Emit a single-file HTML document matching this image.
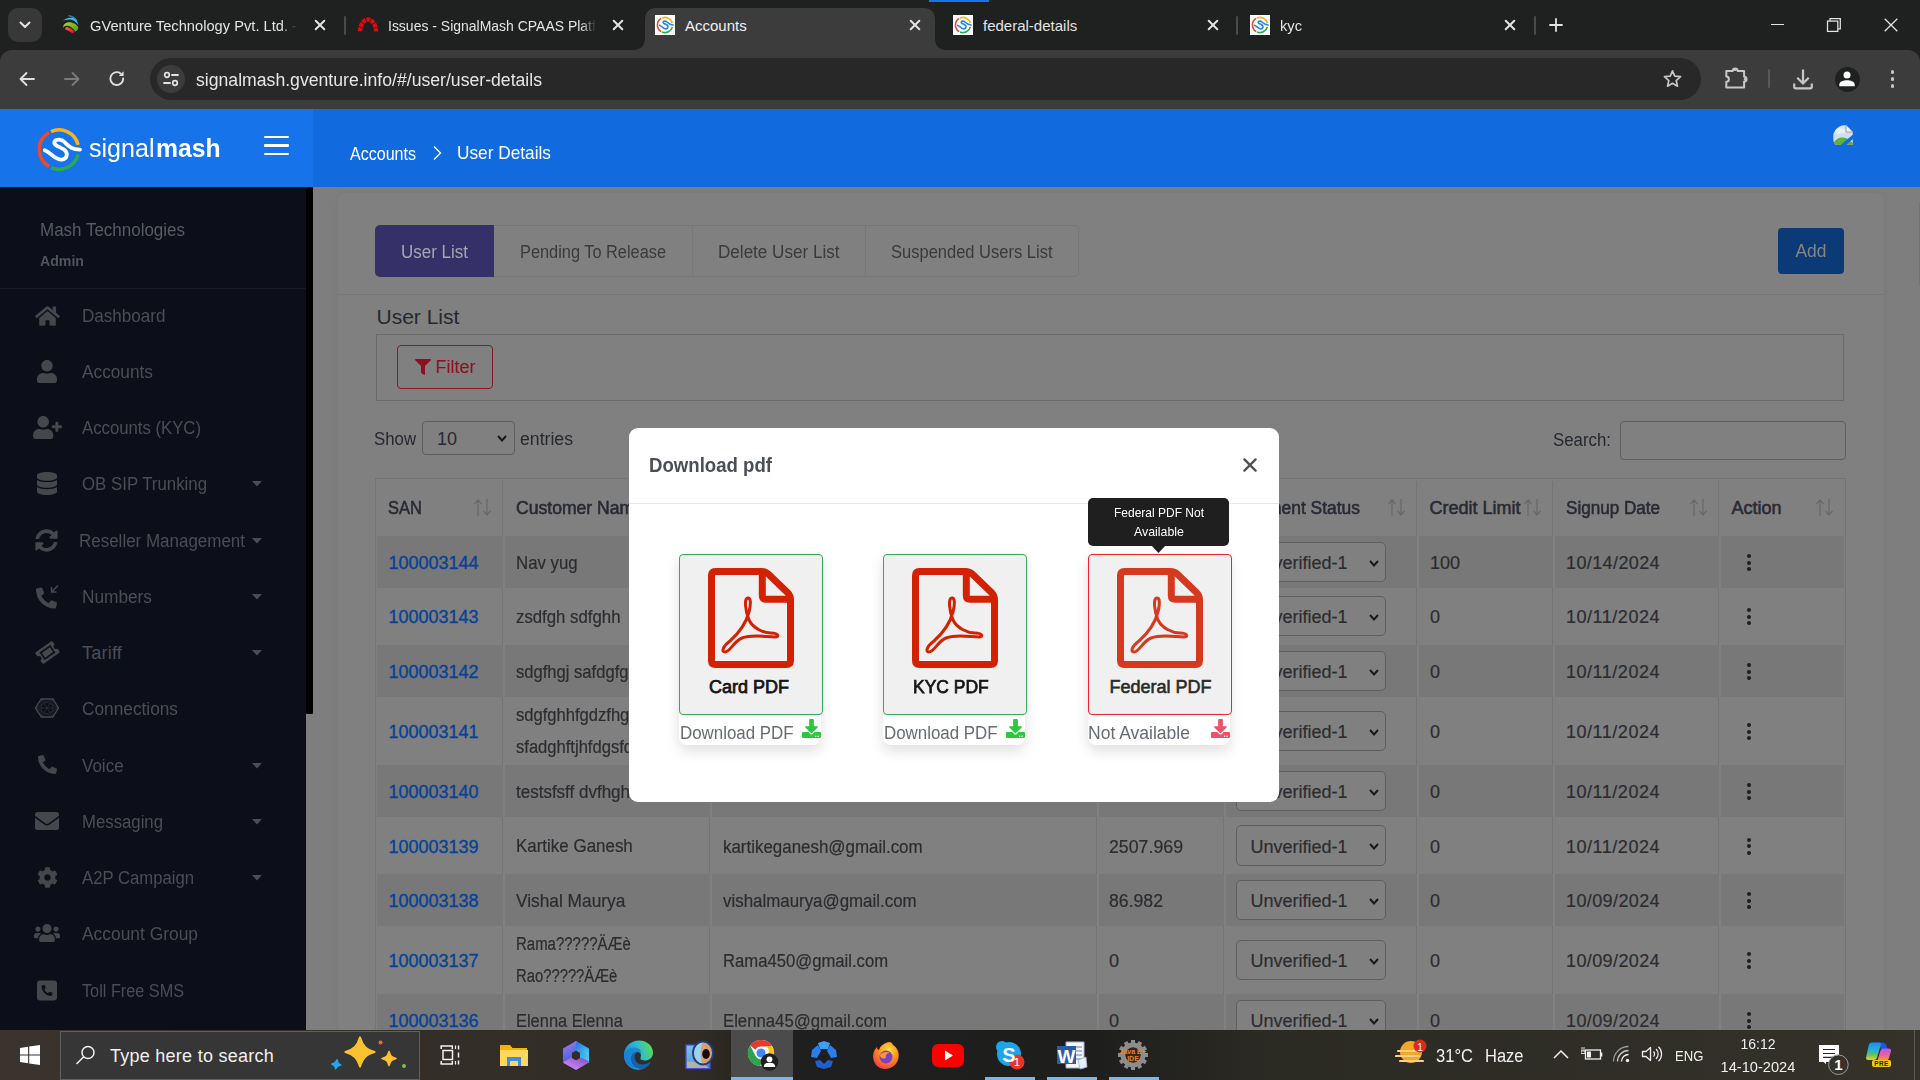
<!DOCTYPE html>
<html lang="en"><head><meta charset="utf-8"><title>Accounts</title>
<style>
html,body{margin:0;padding:0;background:#1f2020;}
body{width:1920px;height:1080px;position:relative;overflow:hidden;font-family:"Liberation Sans",sans-serif;}
.b{position:absolute;display:block;}
.t{position:absolute;white-space:nowrap;}
.bt{-webkit-text-stroke:0.2px #2c2c30;}
</style></head><body>
<div class="b" style="left:0px;top:0px;width:1920px;height:50px;background:#1f2020"></div>
<div class="b" style="left:0px;top:50px;width:1920px;height:59px;background:#3c3c3c"></div>
<div class="b" style="left:0px;top:50px;width:12px;height:12px;background:#1f2020"></div>
<div class="b" style="left:0px;top:50px;width:24px;height:24px;background:#3c3c3c;border-radius:12px 0 0 0"></div>
<div class="b" style="left:1908px;top:50px;width:12px;height:12px;background:#1f2020"></div>
<div class="b" style="left:1896px;top:50px;width:24px;height:24px;background:#3c3c3c;border-radius:0 12px 0 0"></div>
<div class="b" style="left:929px;top:0px;width:60px;height:2px;background:#1a73e8"></div>
<div class="b" style="left:8px;top:8px;width:34px;height:34px;background:#383838;border-radius:10px"></div>
<svg class="b" style="left:17px;top:19px;" width="16" height="12" viewBox="0 0 16 12"><path d="M3.5 3.5 L8 8 L12.5 3.5" stroke="#e3e3e3" stroke-width="2" fill="none" stroke-linecap="round" stroke-linejoin="round"/></svg>
<svg class="b" style="left:633px;top:8px" width="314" height="42" viewBox="0 0 314 42"><path fill="#3c3c3c" d="M0 42 Q12 42 12 30 V12 Q12 0 24 0 H290 Q302 0 302 12 V30 Q302 42 314 42 Z"/></svg>
<svg class="b" style="left:61.5px;top:15.3px;" width="18" height="19.5" viewBox="0 0 18 19.500"><defs><linearGradient id="gv1" x1="0" y1="0" x2="1" y2="1"><stop offset="0" stop-color="#a6d82e"/><stop offset="1" stop-color="#4e9a1e"/></linearGradient><linearGradient id="gv2" x1="0" y1="0" x2="1" y2="0.600"><stop offset="0" stop-color="#ff7a10"/><stop offset="1" stop-color="#f01010"/></linearGradient></defs><path d="M6.500 0.800 C10 0.300 13.500 2.500 15 6 C13 3.300 10 1.800 6.500 0.800Z" fill="#2a9fd0" stroke="#2a9fd0" stroke-width="0.600"/><path d="M0.500 6.500 C3 2.500 10 1.500 13 4 C15 5.500 16.300 8 16.300 10.500 C14.500 6.800 11 4.600 7.500 4.600 C4.500 4.600 2 5.300 0.500 6.500Z" fill="#45bfe8"/><path d="M1.500 13 C0.300 9.500 4 6.800 8 7.200 C12 7.600 15.500 10 16.300 12.500 C16.300 14.500 15 16 13.200 16.600 C11.500 13.500 8 11 5 10.800 C3 10.800 1.800 11.500 1.500 13 Z" fill="url(#gv1)"/><path d="M3.300 15.500 C3 13.500 3.500 12.500 4.200 12.500 C5 12 10.500 14.300 12.500 17 C12 18 11 18.800 10.300 19 C8 17 5.800 16 3.300 15.500Z" fill="#1a2060"/><path d="M3 14.200 C3.200 12.800 4 12 5 12 C8 12.500 11 14.500 12.500 16.500 C12 17.500 11 18.200 10.300 18.300 C8 16.500 5.500 15 3 14.200Z" fill="url(#gv2)"/></svg>
<div class="t " style="font-size:15px;line-height:15px;top:18.00px;color:#e3e3e3;left:90.00px;transform:scaleX(0.9786);transform-origin:0 0;white-space:nowrap;overflow:hidden;padding-bottom:5px;width:213.6px;-webkit-mask-image:linear-gradient(90deg,#000 195.6px,transparent 212.6px);mask-image:linear-gradient(90deg,#000 195.6px,transparent 211.6px);">GVenture Technology Pvt. Ltd. - Home</div>
<svg class="b" style="left:312px;top:17px;" width="16" height="16" viewBox="0 0 16 16"><path d="M3.7 3.7 L12.3 12.3 M12.3 3.7 L3.7 12.3" stroke="#e3e3e3" stroke-width="2.0" stroke-linecap="round"/></svg>
<div class="b" style="left:343.5px;top:16px;width:2px;height:19px;background:#4a4a4a;border-radius:1px"></div>
<svg class="b" style="left:356px;top:15px;" width="24" height="18" viewBox="0 0 24 18"><path d="M4 16.300 A8 11.800 0 0 1 20 16.300" stroke="#e00a0a" stroke-width="4.300" fill="none" stroke-dasharray="3.900 0.750"/></svg>
<div class="t " style="font-size:15px;line-height:15px;top:18.00px;color:#e3e3e3;left:388.00px;transform:scaleX(0.9316);transform-origin:0 0;white-space:nowrap;overflow:hidden;padding-bottom:5px;width:225.4px;-webkit-mask-image:linear-gradient(90deg,#000 207.4px,transparent 224.4px);mask-image:linear-gradient(90deg,#000 207.4px,transparent 223.4px);">Issues - SignalMash CPAAS Platform</div>
<svg class="b" style="left:609.5px;top:17px;" width="16" height="16" viewBox="0 0 16 16"><path d="M3.7 3.7 L12.3 12.3 M12.3 3.7 L3.7 12.3" stroke="#e3e3e3" stroke-width="2.0" stroke-linecap="round"/></svg>
<svg class="b" style="left:655px;top:15px" width="20" height="20" viewBox="0 0 20 20"><rect width="20" height="20" fill="#fff"/><path d="M6.91 3.06 A7.6 7.6 0 0 1 17.37 8.16" stroke="#f9b21a" stroke-width="1.6" fill="none"/><path d="M17.37 11.84 A7.6 7.6 0 0 1 7.03 17.00" stroke="#2eaa4c" stroke-width="1.6" fill="none"/><path d="M6.20 16.58 A7.6 7.6 0 0 1 6.20 3.42" stroke="#ea4a2e" stroke-width="1.6" fill="none"/><g transform="translate(10 10) scale(0.386)"><path d="M -14.2 0.7 C -8 3, -3 11, 3 10 C 9 9, 9 3, 5 0 C 1 -3, -6 -4, -4.5 -8 C -3 -11, 3 -10.5, 6 -7 C 10 -3, 13 0, 21 0" stroke="#1e88e5" stroke-width="4.2" stroke-linecap="round" fill="none"/></g></svg>
<div class="t " style="font-size:15px;line-height:15px;top:18.00px;color:#f1f1f1;left:685.00px;">Accounts</div>
<svg class="b" style="left:907px;top:17px;" width="16" height="16" viewBox="0 0 16 16"><path d="M3.7 3.7 L12.3 12.3 M12.3 3.7 L3.7 12.3" stroke="#e3e3e3" stroke-width="2.0" stroke-linecap="round"/></svg>
<svg class="b" style="left:953px;top:15px" width="20" height="20" viewBox="0 0 20 20"><rect width="20" height="20" fill="#fff"/><path d="M6.91 3.06 A7.6 7.6 0 0 1 17.37 8.16" stroke="#f9b21a" stroke-width="1.6" fill="none"/><path d="M17.37 11.84 A7.6 7.6 0 0 1 7.03 17.00" stroke="#2eaa4c" stroke-width="1.6" fill="none"/><path d="M6.20 16.58 A7.6 7.6 0 0 1 6.20 3.42" stroke="#ea4a2e" stroke-width="1.6" fill="none"/><g transform="translate(10 10) scale(0.386)"><path d="M -14.2 0.7 C -8 3, -3 11, 3 10 C 9 9, 9 3, 5 0 C 1 -3, -6 -4, -4.5 -8 C -3 -11, 3 -10.5, 6 -7 C 10 -3, 13 0, 21 0" stroke="#1e88e5" stroke-width="4.2" stroke-linecap="round" fill="none"/></g></svg>
<div class="t " style="font-size:15px;line-height:15px;top:18.00px;color:#e3e3e3;left:983.00px;">federal-details</div>
<svg class="b" style="left:1204.5px;top:17px;" width="16" height="16" viewBox="0 0 16 16"><path d="M3.7 3.7 L12.3 12.3 M12.3 3.7 L3.7 12.3" stroke="#e3e3e3" stroke-width="2.0" stroke-linecap="round"/></svg>
<div class="b" style="left:1235.5px;top:16px;width:2px;height:19px;background:#4a4a4a;border-radius:1px"></div>
<svg class="b" style="left:1250px;top:15px" width="20" height="20" viewBox="0 0 20 20"><rect width="20" height="20" fill="#fff"/><path d="M6.91 3.06 A7.6 7.6 0 0 1 17.37 8.16" stroke="#f9b21a" stroke-width="1.6" fill="none"/><path d="M17.37 11.84 A7.6 7.6 0 0 1 7.03 17.00" stroke="#2eaa4c" stroke-width="1.6" fill="none"/><path d="M6.20 16.58 A7.6 7.6 0 0 1 6.20 3.42" stroke="#ea4a2e" stroke-width="1.6" fill="none"/><g transform="translate(10 10) scale(0.386)"><path d="M -14.2 0.7 C -8 3, -3 11, 3 10 C 9 9, 9 3, 5 0 C 1 -3, -6 -4, -4.5 -8 C -3 -11, 3 -10.5, 6 -7 C 10 -3, 13 0, 21 0" stroke="#1e88e5" stroke-width="4.2" stroke-linecap="round" fill="none"/></g></svg>
<div class="t " style="font-size:15px;line-height:15px;top:18.00px;color:#e3e3e3;left:1280.00px;transform:scaleX(0.9778);transform-origin:0 0;">kyc</div>
<svg class="b" style="left:1502px;top:17px;" width="16" height="16" viewBox="0 0 16 16"><path d="M3.7 3.7 L12.3 12.3 M12.3 3.7 L3.7 12.3" stroke="#e3e3e3" stroke-width="2.0" stroke-linecap="round"/></svg>
<div class="b" style="left:1533.5px;top:16px;width:2px;height:19px;background:#4a4a4a;border-radius:1px"></div>
<svg class="b" style="left:1548px;top:17px;" width="16" height="16" viewBox="0 0 16 16"><path d="M8 2 V14 M2 8 H14" stroke="#e3e3e3" stroke-width="1.8" stroke-linecap="round"/></svg>
<div class="b" style="left:1771px;top:24px;width:13px;height:1.4px;background:#e3e3e3"></div>
<svg class="b" style="left:1826px;top:17px;" width="16" height="16" viewBox="0 0 16 16"><rect x="1.500" y="4.100" width="10.300" height="10.300" fill="none" stroke="#e3e3e3" stroke-width="1.250"/><path d="M4 4 V1.600 H14.300 V11.900 H12" fill="none" stroke="#e3e3e3" stroke-width="1.250"/></svg>
<svg class="b" style="left:1884px;top:18px;" width="14" height="14" viewBox="0 0 14 14"><path d="M0.7 0.7 L13.3 13.3 M13.3 0.7 L0.7 13.3" stroke="#e3e3e3" stroke-width="1.3"/></svg>
<svg class="b" style="left:18px;top:70px;" width="18" height="18" viewBox="0 0 18 18"><path d="M16 9 H3 M8.5 3 L2.5 9 L8.5 15" stroke="#dedede" stroke-width="1.9" fill="none" stroke-linecap="round" stroke-linejoin="round"/></svg>
<svg class="b" style="left:63px;top:70px;" width="18" height="18" viewBox="0 0 18 18"><path d="M2 9 H15 M9.5 3 L15.500 9 L9.5 15" stroke="#7a7a7a" stroke-width="1.9" fill="none" stroke-linecap="round" stroke-linejoin="round"/></svg>
<svg class="b" style="left:108px;top:69px;" width="18" height="19" viewBox="0 0 18 19"><path d="M15.2 9.5 A6.4 6.4 0 1 1 12.6 4.4" stroke="#dedede" stroke-width="1.9" fill="none" stroke-linecap="round"/><path d="M15.600 2.2 V7 H10.800 Z" fill="#dedede"/></svg>
<div class="b" style="left:150px;top:58px;width:1551px;height:42px;background:#282828;border-radius:21px"></div>
<div class="b" style="left:157px;top:65px;width:28px;height:28px;background:#3c3c3c;border-radius:14px"></div>
<svg class="b" style="left:162px;top:71px;" width="18" height="16" viewBox="0 0 18 16"><circle cx="5" cy="4" r="2.300" fill="none" stroke="#e3e3e3" stroke-width="1.700"/><path d="M10 4 H16" stroke="#e3e3e3" stroke-width="1.800" stroke-linecap="round"/><circle cx="13" cy="12" r="2.300" fill="none" stroke="#e3e3e3" stroke-width="1.700"/><path d="M2 12 H8" stroke="#e3e3e3" stroke-width="1.800" stroke-linecap="round"/></svg>
<div class="t " style="font-size:18px;line-height:18px;top:71.00px;color:#e6e6e6;left:196.00px;transform:scaleX(0.9796);transform-origin:0 0;">signalmash.gventure.info/#/user/user-details</div>
<svg class="b" style="left:1662px;top:68px;" width="21" height="21" viewBox="0 0 24 24"><path d="M12 3.2 L14.600 9.300 L21.200 9.900 L16.200 14.300 L17.700 20.800 L12 17.400 L6.300 20.800 L7.800 14.300 L2.800 9.900 L9.400 9.300 Z" fill="none" stroke="#c7c7c7" stroke-width="1.900" stroke-linejoin="round"/></svg>
<svg class="b" style="left:1722px;top:64px;" width="26" height="26" viewBox="0 0 26 26"><path d="M4.300 6.900 H10.800 A2.400 2.400 0 0 1 15.600 6.900 H22.100 V12.800 A2.400 2.400 0 0 1 22.100 17.600 V23.500 H4.300 V17.800 A2.600 2.600 0 0 0 4.300 12.600 Z" fill="none" stroke="#c7c7c7" stroke-width="2" stroke-linejoin="round"/><circle cx="13.200" cy="5.600" r="1.500" fill="#c7c7c7"/><circle cx="23.300" cy="15.200" r="1.400" fill="#c7c7c7"/></svg>
<div class="b" style="left:1768px;top:69px;width:2px;height:19px;background:#5a5a5a;border-radius:1px"></div>
<svg class="b" style="left:1791.8px;top:67.5px;" width="22" height="22" viewBox="0 0 22 22"><path d="M11 1.600 V15.200 M5.300 9.700 L11 15.500 L16.700 9.700" stroke="#c7c7c7" stroke-width="2.200" fill="none" stroke-linecap="butt" stroke-linejoin="miter"/><path d="M2.200 15.400 V18.700 Q2.200 20.300 3.800 20.300 H18.200 Q19.800 20.300 19.800 18.700 V15.400" stroke="#c7c7c7" stroke-width="2.200" fill="none"/></svg>
<div class="b" style="left:1835px;top:66.5px;width:25px;height:25px;background:#1f2020;border-radius:13px"></div>
<svg class="b" style="left:1838.4px;top:69.5px;" width="18" height="18" viewBox="0 0 18 18"><circle cx="9" cy="4.900" r="3.500" fill="#fff"/><path d="M1.300 16.200 V14.500 C1.300 11.500 6 10.300 9 10.300 C12 10.300 16.700 11.500 16.700 14.500 V16.200 Z" fill="#fff"/></svg>
<div class="b" style="left:1890.5px;top:69.9px;width:3.8px;height:3.8px;background:#c7c7c7;border-radius:2px"></div>
<div class="b" style="left:1890.5px;top:77px;width:3.8px;height:3.8px;background:#c7c7c7;border-radius:2px"></div>
<div class="b" style="left:1890.5px;top:84px;width:3.8px;height:3.8px;background:#c7c7c7;border-radius:2px"></div>
<div class="b" style="left:0px;top:109px;width:313px;height:78px;background:#1673ea"></div>
<div class="b" style="left:313px;top:109px;width:1607px;height:78px;background:#126adf"></div>
<svg class="b" style="left:30px;top:120px" width="60" height="60" viewBox="0 0 60 60"><path d="M20.99 11.60 A19.7 19.7 0 0 1 48.11 24.83" stroke="#f9b21a" stroke-width="3.6" fill="none"/><path d="M48.11 34.37 A19.7 19.7 0 0 1 21.30 47.73" stroke="#2eaa4c" stroke-width="3.6" fill="none"/><path d="M19.15 46.66 A19.7 19.7 0 0 1 19.15 12.54" stroke="#ea4a2e" stroke-width="3.6" fill="none"/><g transform="translate(29 29.6) scale(1.000)"><path d="M -14.2 0.7 C -8 3, -3 11, 3 10 C 9 9, 9 3, 5 0 C 1 -3, -6 -4, -4.5 -8 C -3 -11, 3 -10.5, 6 -7 C 10 -3, 13 0, 21 0" stroke="#fff" stroke-width="3.8" stroke-linecap="round" fill="none"/></g></svg>
<div class="t " style="font-size:26px;line-height:26px;top:135.00px;color:#fff;left:89.00px;transform:scaleX(0.9642);transform-origin:0 0;">signal</div>
<div class="t " style="font-size:26px;line-height:26px;top:135.00px;color:#fff;font-weight:700;left:155.70px;transform:scaleX(0.9511);transform-origin:0 0;">mash</div>
<div class="b" style="left:264px;top:135.7px;width:25px;height:2.6px;background:#fff;border-radius:1px"></div>
<div class="b" style="left:264px;top:144.1px;width:25px;height:2.6px;background:#fff;border-radius:1px"></div>
<div class="b" style="left:264px;top:152.5px;width:25px;height:2.6px;background:#fff;border-radius:1px"></div>
<div class="t " style="font-size:18px;line-height:18px;top:144.60px;color:#fff;left:350.00px;transform:scaleX(0.8914);transform-origin:0 0;">Accounts</div>
<svg class="b" style="left:430px;top:144px;" width="14" height="18" viewBox="0 0 14 18"><path d="M4 2.500 L10.500 9 L4 15.500" stroke="#fff" stroke-width="1.300" fill="none"/></svg>
<div class="t " style="font-size:19px;line-height:19px;top:143.00px;color:#fff;left:457.00px;transform:scaleX(0.9085);transform-origin:0 0;">User Details</div>
<svg class="b" style="left:1833px;top:125px;" width="20" height="20" viewBox="0 0 20 20"><defs><clipPath id="bic"><circle cx="12.500" cy="12.500" r="12.500"/></clipPath></defs><g clip-path="url(#bic)"><path d="M0 0 H13 L20 7 V20 H0 Z" fill="#cfdff5"/><path d="M1 4 C5 2 9 3 12 5 L12 8 L4 9 Z" fill="#e8f0fb"/><path d="M13 0 V7 H20 Z" fill="#f4f4f4" stroke="#9a9a9a" stroke-width="0.900"/><path d="M0 20 C2 12 12 10 17 16 L20 18 V20 Z" fill="#5bb13c"/><path d="M0 0 H13 L20 7 V20 H0 Z" fill="none" stroke="#9a9a9a" stroke-width="0.900"/><path d="M7 20.500 L20.500 9 V13.500 L12.500 20.500 Z" fill="#126adf"/></g></svg>
<div class="b" style="left:0px;top:187px;width:306px;height:843px;background:#0c0e1a"></div>
<div class="t " style="font-size:18px;line-height:18px;top:220.60px;color:#575b62;left:40.00px;transform:scaleX(0.9430);transform-origin:0 0;">Mash Technologies</div>
<div class="t " style="font-size:15px;line-height:15px;top:252.60px;color:#50545b;font-weight:700;left:40.00px;transform:scaleX(0.9429);transform-origin:0 0;">Admin</div>
<div class="b" style="left:0px;top:288px;width:306px;height:1px;background:#181b27"></div>
<div class="t " style="font-size:18px;line-height:18px;top:307.20px;color:#4a4e54;left:82.00px;transform:scaleX(0.9482);transform-origin:0 0;">Dashboard</div>
<svg class="b" style="left:34px;top:304.5px;" width="27" height="22" viewBox="0 0 576 512"><path fill="#44484c" d="M280.37 148.26L96 300.11V464a16 16 0 0 0 16 16l112.06-.29a16 16 0 0 0 15.92-16V368a16 16 0 0 1 16-16h64a16 16 0 0 1 16 16v95.64a16 16 0 0 0 16 16.05L464 480a16 16 0 0 0 16-16V300L295.67 148.26a12.19 12.19 0 0 0-15.3 0zM571.6 251.47L488 182.56V44.05a12 12 0 0 0-12-12h-56a12 12 0 0 0-12 12v72.61L318.47 43a48 48 0 0 0-61 0L4.34 251.47a12 12 0 0 0-1.6 16.9l25.5 31A12 12 0 0 0 45.15 301l235.22-193.74a12.19 12.19 0 0 1 15.3 0L530.9 301a12 12 0 0 0 16.9-1.6l25.5-31a12 12 0 0 0-1.7-16.93z"/></svg>
<div class="t " style="font-size:18px;line-height:18px;top:363.20px;color:#4a4e54;left:82.00px;transform:scaleX(0.9589);transform-origin:0 0;">Accounts</div>
<svg class="b" style="left:37px;top:360px;" width="20" height="23" viewBox="0 0 448 512"><path fill="#44484c" d="M224 256c70.7 0 128-57.3 128-128S294.7 0 224 0 96 57.3 96 128s57.3 128 128 128zm89.6 32h-16.7c-22.2 10.2-46.9 16-72.9 16s-50.6-5.8-72.9-16h-16.7C60.2 288 0 348.2 0 422.4V464c0 26.5 21.5 48 48 48h352c26.5 0 48-21.5 48-48v-41.6c0-74.2-60.2-134.4-134.4-134.4z"/></svg>
<div class="t " style="font-size:18px;line-height:18px;top:419.20px;color:#4a4e54;left:82.00px;transform:scaleX(0.9294);transform-origin:0 0;">Accounts (KYC)</div>
<svg class="b" style="left:33px;top:415.5px;" width="29" height="23" viewBox="0 0 640 512"><path fill="#44484c" d="M624 208h-64v-64c0-8.8-7.2-16-16-16h-32c-8.8 0-16 7.2-16 16v64h-64c-8.8 0-16 7.2-16 16v32c0 8.8 7.2 16 16 16h64v64c0 8.8 7.2 16 16 16h32c8.8 0 16-7.2 16-16v-64h64c8.8 0 16-7.2 16-16v-32c0-8.8-7.2-16-16-16zm-400 48c70.7 0 128-57.3 128-128S294.7 0 224 0 96 57.3 96 128s57.3 128 128 128zm89.6 32h-16.7c-22.2 10.2-46.9 16-72.9 16s-50.6-5.8-72.9-16h-16.7C60.2 288 0 348.2 0 422.4V464c0 26.5 21.5 48 48 48h352c26.5 0 48-21.5 48-48v-41.6c0-74.2-60.2-134.4-134.4-134.4z"/></svg>
<div class="t " style="font-size:18px;line-height:18px;top:475.20px;color:#4a4e54;left:82.00px;transform:scaleX(0.9347);transform-origin:0 0;">OB SIP Trunking</div>
<svg class="b" style="left:252px;top:481px;" width="10" height="6" viewBox="0 0 10 6"><path d="M0 0 H10 L5 5.500 Z" fill="#4a4e54"/></svg>
<svg class="b" style="left:37px;top:471.5px;" width="20" height="23" viewBox="0 0 448 512"><path fill="#44484c" d="M448 73.143v45.714C448 159.143 347.667 192 224 192S0 159.143 0 118.857V73.143C0 32.857 100.333 0 224 0s224 32.857 224 73.143zM448 176v102.857C448 319.143 347.667 352 224 352S0 319.143 0 278.857V176c48.125 33.143 136.208 48.572 224 48.572S399.874 209.143 448 176zm0 160v102.857C448 479.143 347.667 512 224 512S0 479.143 0 438.857V336c48.125 33.143 136.208 48.572 224 48.572S399.874 369.143 448 336z"/></svg>
<div class="t " style="font-size:18px;line-height:18px;top:532.20px;color:#4a4e54;left:79.00px;transform:scaleX(0.9427);transform-origin:0 0;">Reseller Management</div>
<svg class="b" style="left:252px;top:538px;" width="10" height="6" viewBox="0 0 10 6"><path d="M0 0 H10 L5 5.500 Z" fill="#4a4e54"/></svg>
<svg class="b" style="left:34.5px;top:528.5px;" width="23" height="23" viewBox="0 0 512 512"><path fill="#44484c" d="M370.72 133.28C339.458 104.008 298.888 87.962 255.848 88c-77.458.068-144.328 53.178-162.791 126.85-1.344 5.363-6.122 9.15-11.651 9.15H24.103c-7.498 0-13.194-6.807-11.807-14.176C33.933 94.924 134.813 8 256 8c66.448 0 126.791 26.136 171.315 68.685L463.03 40.97C478.149 25.851 504 36.559 504 57.941V192c0 13.255-10.745 24-24 24H345.941c-21.382 0-32.09-25.851-16.971-40.971l41.75-41.749zM32 296h134.059c21.382 0 32.09 25.851 16.971 40.971l-41.75 41.75c31.262 29.273 71.835 45.319 114.876 45.28 77.418-.07 144.315-53.144 162.787-126.849 1.344-5.363 6.122-9.15 11.651-9.15h57.304c7.498 0 13.194 6.807 11.807 14.176C478.067 417.076 377.187 504 256 504c-66.448 0-126.791-26.136-171.315-68.685L48.97 471.03C33.851 486.149 8 475.441 8 454.059V320c0-13.255 10.745-24 24-24z"/></svg>
<div class="t " style="font-size:18px;line-height:18px;top:588.20px;color:#4a4e54;left:82.00px;transform:scaleX(0.9586);transform-origin:0 0;">Numbers</div>
<svg class="b" style="left:252px;top:594px;" width="10" height="6" viewBox="0 0 10 6"><path d="M0 0 H10 L5 5.500 Z" fill="#4a4e54"/></svg>
<svg class="b" style="left:35px;top:584px;" width="25" height="25" viewBox="0 0 25 25"><g transform="translate(1 3.500) scale(0.041)"><path fill="#44484c" d="M497.39 361.8l-112-48a24 24 0 0 0-28 6.9l-49.6 60.6A370.66 370.66 0 0 1 130.6 204.11l60.6-49.6a23.94 23.94 0 0 0 6.9-28l-48-112A24.16 24.16 0 0 0 122.6.61l-104 24A24 24 0 0 0 0 48c0 256.5 207.9 464 464 464a24 24 0 0 0 23.4-18.6l24-104a24.29 24.29 0 0 0-14.01-27.6z"/></g><path d="M23 1.500 L16.500 8 M16.500 3 V8 H21.500" stroke="#44484c" stroke-width="1.500" fill="none"/></svg>
<div class="t " style="font-size:18px;line-height:18px;top:644.20px;color:#4a4e54;letter-spacing:0.220px;left:82.00px;">Tariff</div>
<svg class="b" style="left:252px;top:650px;" width="10" height="6" viewBox="0 0 10 6"><path d="M0 0 H10 L5 5.500 Z" fill="#4a4e54"/></svg>
<svg class="b" style="left:35px;top:640px;" width="25" height="25" viewBox="0 0 25 25"><g transform="rotate(-35 12.500 12.500)"><path fill="#44484c" fill-rule="evenodd" d="M2 7 a1.500 1.500 0 0 1 1.500 -1.500 H21.500 a1.500 1.500 0 0 1 1.500 1.500 V10 a2.500 2.500 0 0 0 0 5 V18 a1.500 1.500 0 0 1 -1.500 1.500 H3.500 a1.500 1.500 0 0 1 -1.500 -1.500 V15 a2.500 2.500 0 0 0 0 -5 Z M6 8 V17 H19 V8 Z M7.600 9.600 H17.400 V15.400 H7.600 Z"/></g></svg>
<div class="t " style="font-size:18px;line-height:18px;top:700.20px;color:#4a4e54;left:82.00px;transform:scaleX(0.9594);transform-origin:0 0;">Connections</div>
<svg class="b" style="left:34px;top:696px;" width="26" height="24" viewBox="0 0 26 24"><path d="M24.5 12.0 L18.8 21.0 L7.3 21.0 L1.5 12.0 L7.2 3.0 L18.8 3.0 Z" fill="none" stroke="#44484c" stroke-width="1.400"/><path d="M24.5 12.0 L7.3 21.0" stroke="#44484c" stroke-width="0.550" opacity=".8"/><path d="M24.5 12.0 L1.5 12.0" stroke="#44484c" stroke-width="0.550" opacity=".8"/><path d="M24.5 12.0 L7.2 3.0" stroke="#44484c" stroke-width="0.550" opacity=".8"/><path d="M18.8 21.0 L1.5 12.0" stroke="#44484c" stroke-width="0.550" opacity=".8"/><path d="M18.8 21.0 L7.2 3.0" stroke="#44484c" stroke-width="0.550" opacity=".8"/><path d="M18.8 21.0 L18.8 3.0" stroke="#44484c" stroke-width="0.550" opacity=".8"/><path d="M7.3 21.0 L7.2 3.0" stroke="#44484c" stroke-width="0.550" opacity=".8"/><path d="M7.3 21.0 L18.8 3.0" stroke="#44484c" stroke-width="0.550" opacity=".8"/><path d="M1.5 12.0 L18.8 3.0" stroke="#44484c" stroke-width="0.550" opacity=".8"/></svg>
<div class="t " style="font-size:18px;line-height:18px;top:757.20px;color:#4a4e54;left:82.00px;transform:scaleX(0.9447);transform-origin:0 0;">Voice</div>
<svg class="b" style="left:252px;top:763px;" width="10" height="6" viewBox="0 0 10 6"><path d="M0 0 H10 L5 5.500 Z" fill="#4a4e54"/></svg>
<svg class="b" style="left:37.5px;top:755px;" width="19" height="19" viewBox="0 0 512 512"><path fill="#44484c" d="M497.39 361.8l-112-48a24 24 0 0 0-28 6.9l-49.6 60.6A370.66 370.66 0 0 1 130.6 204.11l60.6-49.6a23.94 23.94 0 0 0 6.9-28l-48-112A24.16 24.16 0 0 0 122.6.61l-104 24A24 24 0 0 0 0 48c0 256.5 207.9 464 464 464a24 24 0 0 0 23.4-18.6l24-104a24.29 24.29 0 0 0-14.01-27.6z"/></svg>
<div class="t " style="font-size:18px;line-height:18px;top:813.20px;color:#4a4e54;left:82.00px;transform:scaleX(0.9305);transform-origin:0 0;">Messaging</div>
<svg class="b" style="left:252px;top:819px;" width="10" height="6" viewBox="0 0 10 6"><path d="M0 0 H10 L5 5.500 Z" fill="#4a4e54"/></svg>
<svg class="b" style="left:35px;top:809px;" width="24" height="24" viewBox="0 0 512 512"><path fill="#44484c" d="M502.3 190.8c3.9-3.1 9.7-.2 9.7 4.7V400c0 26.5-21.5 48-48 48H48c-26.5 0-48-21.5-48-48V195.6c0-5 5.7-7.8 9.7-4.7 22.4 17.4 52.1 39.5 154.1 113.6 21.1 15.4 56.7 47.8 92.2 47.6 35.7.3 72-32.8 92.3-47.6 102-74.1 131.6-96.3 154-113.7zM256 320c23.2.4 56.6-29.2 73.4-41.4 132.7-96.3 142.8-104.7 173.4-128.7 5.8-4.5 9.2-11.5 9.2-18.9v-19c0-26.5-21.5-48-48-48H48C21.5 64 0 85.5 0 112v19c0 7.4 3.4 14.3 9.2 18.9 30.6 23.9 40.7 32.4 173.4 128.7 16.800 12.200 50.200 41.800 73.400 41.400z"/></svg>
<div class="t " style="font-size:18px;line-height:18px;top:869.20px;color:#4a4e54;left:82.00px;transform:scaleX(0.9275);transform-origin:0 0;">A2P Campaign</div>
<svg class="b" style="left:252px;top:875px;" width="10" height="6" viewBox="0 0 10 6"><path d="M0 0 H10 L5 5.500 Z" fill="#4a4e54"/></svg>
<svg class="b" style="left:36.5px;top:866.5px;" width="21" height="21" viewBox="0 0 512 512"><path fill="#44484c" d="M487.4 315.7l-42.6-24.6c4.3-23.2 4.3-47 0-70.2l42.6-24.600c4.900-2.800 7.100-8.600 5.500-14-11.100-35.600-30-67.800-54.700-94.600-3.800-4.100-10-5.100-14.800-2.300L380.800 110c-17.900-15.400-38.500-27.300-60.800-35.100V25.800c0-5.600-3.900-10.500-9.400-11.700-36.700-8.200-74.300-7.800-109.200 0-5.500 1.200-9.400 6.100-9.400 11.700V75c-22.200 7.900-42.800 19.800-60.800 35.100L88.700 85.500c-4.900-2.800-11-1.900-14.800 2.300-24.700 26.700-43.600 58.900-54.700 94.600-1.700 5.400.6 11.200 5.500 14L67.300 221c-4.300 23.200-4.300 47 0 70.200l-42.600 24.600c-4.900 2.800-7.100 8.600-5.500 14 11.100 35.600 30 67.800 54.700 94.600 3.800 4.100 10 5.100 14.800 2.300l42.600-24.600c17.900 15.400 38.500 27.300 60.800 35.100v49.200c0 5.600 3.900 10.500 9.400 11.700 36.700 8.200 74.300 7.800 109.200 0 5.500-1.200 9.400-6.100 9.400-11.700v-49.200c22.200-7.900 42.800-19.800 60.800-35.100l42.600 24.600c4.900 2.800 11 1.900 14.800-2.300 24.700-26.700 43.600-58.900 54.700-94.600 1.500-5.500-.7-11.300-5.600-14.100zM256 336c-44.100 0-80-35.900-80-80s35.900-80 80-80 80 35.900 80 80-35.900 80-80 80z"/></svg>
<div class="t " style="font-size:18px;line-height:18px;top:925.20px;color:#4a4e54;left:82.00px;transform:scaleX(0.9661);transform-origin:0 0;">Account Group</div>
<svg class="b" style="left:34px;top:922px;" width="26" height="22" viewBox="0 0 640 512"><path fill="#44484c" d="M96 224c35.3 0 64-28.7 64-64s-28.7-64-64-64-64 28.700-64 64 28.700 64 64 64zm448 0c35.300 0 64-28.700 64-64s-28.700-64-64-64-64 28.700-64 64 28.700 64 64 64zm32 32h-64c-17.600 0-33.500 7.100-45.100 18.600 40.300 22.100 68.900 62 75.100 109.400h66c17.700 0 32-14.300 32-32v-32c0-35.300-28.700-64-64-64zm-256 0c61.900 0 112-50.100 112-112S381.900 32 320 32 208 82.100 208 144s50.100 112 112 112zm76.800 32h-8.300c-20.800 10-43.900 16-68.500 16s-47.600-6-68.500-16h-8.300C179.600 288 128 339.600 128 403.200V432c0 26.500 21.500 48 48 48h288c26.500 0 48-21.500 48-48v-28.800c0-63.600-51.600-115.200-115.200-115.200zm-223.700-13.400C161.500 263.100 145.600 256 128 256H64c-35.300 0-64 28.700-64 64v32c0 17.700 14.300 32 32 32h65.900c6.300-47.400 34.900-87.300 75.200-109.400z"/></svg>
<div class="t " style="font-size:18px;line-height:18px;top:982.20px;color:#4a4e54;left:82.00px;transform:scaleX(0.9024);transform-origin:0 0;">Toll Free SMS</div>
<svg class="b" style="left:37px;top:979.5px;" width="20" height="21" viewBox="0 0 20 21"><rect x="0" y="0.500" width="20" height="20" rx="3" fill="#44484c"/><g transform="translate(4.500 5) scale(0.0215)"><path fill="#0c0e1a" d="M497.39 361.8l-112-48a24 24 0 0 0-28 6.9l-49.6 60.6A370.66 370.66 0 0 1 130.6 204.11l60.6-49.6a23.94 23.94 0 0 0 6.9-28l-48-112A24.16 24.16 0 0 0 122.6.61l-104 24A24 24 0 0 0 0 48c0 256.5 207.9 464 464 464a24 24 0 0 0 23.4-18.6l24-104a24.29 24.29 0 0 0-14.01-27.6z"/></g></svg>
<div class="b" style="left:306px;top:187px;width:7px;height:527px;background:#000;border-radius:4px 4px 4px 4px"></div>
<div class="b" style="left:313px;top:187px;width:1607px;height:843px;background:#7e7e7e"></div>
<div class="b" style="left:306px;top:714px;width:7px;height:316px;background:#7e7e7e"></div>
<div class="b" style="left:338px;top:193px;width:1546px;height:844px;background:#808080;border-radius:8px 8px 0 0;box-shadow:0 0 5px rgba(0,0,0,.05)"></div>
<div class="b" style="left:375px;top:225px;width:703.5px;height:51.5px;border:1px solid #777;border-radius:5px;box-sizing:border-box"></div>
<div class="b" style="left:375px;top:225px;width:119px;height:51.5px;background:#363068;border-radius:5px 0 0 5px"></div>
<div class="b" style="left:691.5px;top:226px;width:1px;height:50px;background:#777"></div>
<div class="b" style="left:864.5px;top:226px;width:1px;height:50px;background:#777"></div>
<div class="t " style="font-size:18px;line-height:18px;top:242.50px;color:#a6a6b0;left:401.00px;transform:scaleX(0.9434);transform-origin:0 0;">User List</div>
<div class="t " style="font-size:18px;line-height:18px;top:242.50px;color:#3a3a3a;left:520.00px;transform:scaleX(0.9080);transform-origin:0 0;">Pending To Release</div>
<div class="t " style="font-size:18px;line-height:18px;top:242.50px;color:#3a3a3a;left:718.00px;transform:scaleX(0.9488);transform-origin:0 0;">Delete User List</div>
<div class="t " style="font-size:18px;line-height:18px;top:242.50px;color:#3a3a3a;left:891.00px;transform:scaleX(0.9171);transform-origin:0 0;">Suspended Users List</div>
<div class="b" style="left:1778px;top:228px;width:66px;height:46px;background:#0b3a76;border-radius:4px"></div>
<div class="t " style="font-size:18px;line-height:18px;top:242.00px;color:#858585;left:1411.00px;width:800px;text-align:center;transform:scaleX(0.9679);transform-origin:50% 0;">Add</div>
<div class="b" style="left:338px;top:293.5px;width:1546px;height:1px;background:#767676"></div>
<div class="t " style="font-size:21px;line-height:21px;top:305.80px;color:#26282f;left:376.50px;">User List</div>
<div class="b" style="left:376px;top:334px;width:1468px;height:66.5px;border:1px solid #6b6b6b;box-sizing:border-box"></div>
<div class="b" style="left:397px;top:345px;width:95.5px;height:44px;border:1px solid #8a1a26;border-radius:4px;box-sizing:border-box"></div>
<svg class="b" style="left:415px;top:359px;" width="16" height="16" viewBox="0 0 512 512"><path fill="#8a1220" d="M487.976 0H24.028C2.71 0-8.047 25.866 7.058 40.971L192 225.941V432c0 7.831 3.821 15.17 10.237 19.662l80 55.98C298.02 518.69 320 507.493 320 487.98V225.941l184.947-184.97C520.021 25.896 509.338 0 487.976 0z"/></svg>
<div class="t " style="font-size:18px;line-height:18px;top:357.80px;color:#8a1220;left:435.50px;">Filter</div>
<div class="t " style="font-size:18px;line-height:18px;top:430.00px;color:#26282f;left:374.00px;transform:scaleX(0.9328);transform-origin:0 0;">Show</div>
<div class="b" style="left:421.5px;top:421px;width:93px;height:34px;border:1px solid #5e5e5e;border-radius:4px;box-sizing:border-box"></div>
<div class="t " style="font-size:18px;line-height:18px;top:430.00px;color:#26282f;left:437.00px;">10</div>
<svg class="b" style="left:496px;top:434px;" width="12" height="9" viewBox="0 0 12 9"><path d="M2 2 L6 6.500 L10 2" stroke="#1a1a1a" stroke-width="2" fill="none"/></svg>
<div class="t " style="font-size:18px;line-height:18px;top:430.00px;color:#26282f;left:519.50px;transform:scaleX(0.9810);transform-origin:0 0;">entries</div>
<div class="t " style="font-size:18px;line-height:18px;top:431.00px;color:#26282f;left:1553.00px;transform:scaleX(0.9350);transform-origin:0 0;">Search:</div>
<div class="b" style="left:1620px;top:420.5px;width:225.5px;height:39px;border:1px solid #5e5e5e;border-radius:4px;box-sizing:border-box"></div>
<div class="b" style="left:374.5px;top:478px;width:1471px;height:560px;border:1px solid #747474;box-sizing:border-box"></div>
<div class="b" style="left:502px;top:481px;width:1px;height:560px;background:#747474"></div>
<div class="b" style="left:709px;top:481px;width:1px;height:560px;background:#747474"></div>
<div class="b" style="left:1096px;top:481px;width:1px;height:560px;background:#747474"></div>
<div class="b" style="left:1223px;top:481px;width:1px;height:560px;background:#747474"></div>
<div class="b" style="left:1416px;top:481px;width:1px;height:560px;background:#747474"></div>
<div class="b" style="left:1552px;top:481px;width:1px;height:560px;background:#747474"></div>
<div class="b" style="left:1718px;top:481px;width:1px;height:560px;background:#747474"></div>
<div class="t " style="font-size:18px;line-height:18px;top:498.80px;color:#282a33;left:387.50px;transform:scaleX(0.9132);transform-origin:0 0;-webkit-text-stroke:0.55px #282a33;">SAN</div>
<svg class="b" style="left:473px;top:498px;" width="20" height="19" viewBox="0 0 20 19"><path d="M5 18 V2 M1.500 6 L5 2 L8.500 6" stroke="#686868" stroke-width="1.200" fill="none"/><path d="M14 1 V17 M10.500 13 L14 17 L17.500 13" stroke="#686868" stroke-width="1.200" fill="none"/></svg>
<div class="t " style="font-size:18px;line-height:18px;top:498.80px;color:#282a33;left:515.50px;transform:scaleX(0.9768);transform-origin:0 0;-webkit-text-stroke:0.55px #282a33;">Customer Name</div>
<svg class="b" style="left:680px;top:498px;" width="20" height="19" viewBox="0 0 20 19"><path d="M5 18 V2 M1.500 6 L5 2 L8.500 6" stroke="#686868" stroke-width="1.200" fill="none"/><path d="M14 1 V17 M10.500 13 L14 17 L17.500 13" stroke="#686868" stroke-width="1.200" fill="none"/></svg>
<div class="t " style="font-size:18px;line-height:18px;top:498.80px;color:#282a33;letter-spacing:0.198px;left:722.50px;-webkit-text-stroke:0.55px #282a33;">Email</div>
<svg class="b" style="left:1067px;top:498px;" width="20" height="19" viewBox="0 0 20 19"><path d="M5 18 V2 M1.500 6 L5 2 L8.500 6" stroke="#686868" stroke-width="1.200" fill="none"/><path d="M14 1 V17 M10.500 13 L14 17 L17.500 13" stroke="#686868" stroke-width="1.200" fill="none"/></svg>
<div class="t " style="font-size:18px;line-height:18px;top:498.80px;color:#282a33;letter-spacing:0.136px;left:1109.50px;-webkit-text-stroke:0.55px #282a33;">Balance</div>
<svg class="b" style="left:1194px;top:498px;" width="20" height="19" viewBox="0 0 20 19"><path d="M5 18 V2 M1.500 6 L5 2 L8.500 6" stroke="#686868" stroke-width="1.200" fill="none"/><path d="M14 1 V17 M10.500 13 L14 17 L17.500 13" stroke="#686868" stroke-width="1.200" fill="none"/></svg>
<div class="t " style="font-size:18px;line-height:18px;top:498.80px;color:#282a33;left:1236.50px;transform:scaleX(0.9680);transform-origin:0 0;-webkit-text-stroke:0.55px #282a33;">Payment Status</div>
<svg class="b" style="left:1387px;top:498px;" width="20" height="19" viewBox="0 0 20 19"><path d="M5 18 V2 M1.500 6 L5 2 L8.500 6" stroke="#686868" stroke-width="1.200" fill="none"/><path d="M14 1 V17 M10.500 13 L14 17 L17.500 13" stroke="#686868" stroke-width="1.200" fill="none"/></svg>
<div class="t " style="font-size:18px;line-height:18px;top:498.80px;color:#282a33;left:1429.50px;-webkit-text-stroke:0.55px #282a33;">Credit Limit</div>
<svg class="b" style="left:1523px;top:498px;" width="20" height="19" viewBox="0 0 20 19"><path d="M5 18 V2 M1.500 6 L5 2 L8.500 6" stroke="#686868" stroke-width="1.200" fill="none"/><path d="M14 1 V17 M10.500 13 L14 17 L17.500 13" stroke="#686868" stroke-width="1.200" fill="none"/></svg>
<div class="t " style="font-size:18px;line-height:18px;top:498.80px;color:#282a33;left:1565.50px;transform:scaleX(0.9488);transform-origin:0 0;-webkit-text-stroke:0.55px #282a33;">Signup Date</div>
<svg class="b" style="left:1689px;top:498px;" width="20" height="19" viewBox="0 0 20 19"><path d="M5 18 V2 M1.500 6 L5 2 L8.500 6" stroke="#686868" stroke-width="1.200" fill="none"/><path d="M14 1 V17 M10.500 13 L14 17 L17.500 13" stroke="#686868" stroke-width="1.200" fill="none"/></svg>
<div class="t " style="font-size:18px;line-height:18px;top:498.80px;color:#282a33;left:1731.50px;-webkit-text-stroke:0.55px #282a33;">Action</div>
<svg class="b" style="left:1814.5px;top:498px;" width="20" height="19" viewBox="0 0 20 19"><path d="M5 18 V2 M1.500 6 L5 2 L8.500 6" stroke="#686868" stroke-width="1.200" fill="none"/><path d="M14 1 V17 M10.500 13 L14 17 L17.500 13" stroke="#686868" stroke-width="1.200" fill="none"/></svg>
<div class="b" style="left:376.5px;top:536px;width:126px;height:52px;background:#787878"></div>
<div class="b" style="left:504.5px;top:536px;width:205px;height:52px;background:#787878"></div>
<div class="b" style="left:711.5px;top:536px;width:385px;height:52px;background:#787878"></div>
<div class="b" style="left:1098.5px;top:536px;width:125px;height:52px;background:#787878"></div>
<div class="b" style="left:1225.5px;top:536px;width:191px;height:52px;background:#787878"></div>
<div class="b" style="left:1418.5px;top:536px;width:134px;height:52px;background:#787878"></div>
<div class="b" style="left:1554.5px;top:536px;width:164px;height:52px;background:#787878"></div>
<div class="b" style="left:1720.5px;top:536px;width:123.5px;height:52px;background:#787878"></div>
<div class="t " style="font-size:18px;line-height:18px;top:554.20px;color:#06429a;left:388.50px;-webkit-text-stroke:0.35px #06429a;">100003144</div>
<div class="t bt" style="font-size:18px;line-height:18px;top:553.70px;color:#2c2c30;left:515.50px;transform:scaleX(0.9329);transform-origin:0 0;">Nav yug</div>
<div class="t bt" style="font-size:18px;line-height:18px;top:554.20px;color:#2c2c30;left:722.50px;">navyug@gmail.com</div>
<div class="t bt" style="font-size:18px;line-height:18px;top:554.20px;color:#2c2c30;left:1109.00px;">0</div>
<div class="b" style="left:1236px;top:541.5px;width:149.5px;height:40.5px;border:1px solid #5e5e5e;border-radius:5px;box-sizing:border-box;background:#808080"></div>
<div class="t bt" style="font-size:18px;line-height:18px;top:554.20px;color:#2c2c30;left:1250.50px;">Unverified-1</div>
<svg class="b" style="left:1368px;top:558.5px;" width="12" height="9" viewBox="0 0 12 9"><path d="M2 2 L6 6.500 L10 2" stroke="#1a1a1a" stroke-width="2" fill="none"/></svg>
<div class="t bt" style="font-size:18px;line-height:18px;top:554.20px;color:#2c2c30;left:1430.00px;">100</div>
<div class="t bt" style="font-size:18px;line-height:18px;top:554.20px;color:#2c2c30;letter-spacing:0.391px;left:1566.00px;">10/14/2024</div>
<div class="b" style="left:1747px;top:554px;width:4px;height:4px;background:#1e1e1e;border-radius:2px"></div>
<div class="b" style="left:1747px;top:560.5px;width:4px;height:4px;background:#1e1e1e;border-radius:2px"></div>
<div class="b" style="left:1747px;top:567px;width:4px;height:4px;background:#1e1e1e;border-radius:2px"></div>
<div class="t " style="font-size:18px;line-height:18px;top:608.20px;color:#06429a;left:388.50px;-webkit-text-stroke:0.35px #06429a;">100003143</div>
<div class="t bt" style="font-size:18px;line-height:18px;top:607.70px;color:#2c2c30;left:515.50px;transform:scaleX(0.9324);transform-origin:0 0;">zsdfgh sdfghh</div>
<div class="t bt" style="font-size:18px;line-height:18px;top:608.20px;color:#2c2c30;left:722.50px;">zsdfgh@gmail.com</div>
<div class="t bt" style="font-size:18px;line-height:18px;top:608.20px;color:#2c2c30;left:1109.00px;">0</div>
<div class="b" style="left:1236px;top:595.5px;width:149.5px;height:40.5px;border:1px solid #5e5e5e;border-radius:5px;box-sizing:border-box"></div>
<div class="t bt" style="font-size:18px;line-height:18px;top:608.20px;color:#2c2c30;left:1250.50px;">Unverified-1</div>
<svg class="b" style="left:1368px;top:612.5px;" width="12" height="9" viewBox="0 0 12 9"><path d="M2 2 L6 6.500 L10 2" stroke="#1a1a1a" stroke-width="2" fill="none"/></svg>
<div class="t bt" style="font-size:18px;line-height:18px;top:608.20px;color:#2c2c30;left:1430.00px;">0</div>
<div class="t bt" style="font-size:18px;line-height:18px;top:608.20px;color:#2c2c30;letter-spacing:0.525px;left:1566.00px;">10/11/2024</div>
<div class="b" style="left:1747px;top:608px;width:4px;height:4px;background:#1e1e1e;border-radius:2px"></div>
<div class="b" style="left:1747px;top:614.5px;width:4px;height:4px;background:#1e1e1e;border-radius:2px"></div>
<div class="b" style="left:1747px;top:621px;width:4px;height:4px;background:#1e1e1e;border-radius:2px"></div>
<div class="b" style="left:376.5px;top:645px;width:126px;height:52px;background:#787878"></div>
<div class="b" style="left:504.5px;top:645px;width:205px;height:52px;background:#787878"></div>
<div class="b" style="left:711.5px;top:645px;width:385px;height:52px;background:#787878"></div>
<div class="b" style="left:1098.5px;top:645px;width:125px;height:52px;background:#787878"></div>
<div class="b" style="left:1225.5px;top:645px;width:191px;height:52px;background:#787878"></div>
<div class="b" style="left:1418.5px;top:645px;width:134px;height:52px;background:#787878"></div>
<div class="b" style="left:1554.5px;top:645px;width:164px;height:52px;background:#787878"></div>
<div class="b" style="left:1720.5px;top:645px;width:123.5px;height:52px;background:#787878"></div>
<div class="t " style="font-size:18px;line-height:18px;top:663.20px;color:#06429a;left:388.50px;-webkit-text-stroke:0.35px #06429a;">100003142</div>
<div class="t bt" style="font-size:18px;line-height:18px;top:662.70px;color:#2c2c30;left:515.50px;transform:scaleX(0.9213);transform-origin:0 0;">sdgfhgj safdgfgh</div>
<div class="t bt" style="font-size:18px;line-height:18px;top:663.20px;color:#2c2c30;left:722.50px;">sdgfhgj@gmail.com</div>
<div class="t bt" style="font-size:18px;line-height:18px;top:663.20px;color:#2c2c30;left:1109.00px;">0</div>
<div class="b" style="left:1236px;top:650.5px;width:149.5px;height:40.5px;border:1px solid #5e5e5e;border-radius:5px;box-sizing:border-box;background:#808080"></div>
<div class="t bt" style="font-size:18px;line-height:18px;top:663.20px;color:#2c2c30;left:1250.50px;">Unverified-1</div>
<svg class="b" style="left:1368px;top:667.5px;" width="12" height="9" viewBox="0 0 12 9"><path d="M2 2 L6 6.500 L10 2" stroke="#1a1a1a" stroke-width="2" fill="none"/></svg>
<div class="t bt" style="font-size:18px;line-height:18px;top:663.20px;color:#2c2c30;left:1430.00px;">0</div>
<div class="t bt" style="font-size:18px;line-height:18px;top:663.20px;color:#2c2c30;letter-spacing:0.525px;left:1566.00px;">10/11/2024</div>
<div class="b" style="left:1747px;top:663px;width:4px;height:4px;background:#1e1e1e;border-radius:2px"></div>
<div class="b" style="left:1747px;top:669.5px;width:4px;height:4px;background:#1e1e1e;border-radius:2px"></div>
<div class="b" style="left:1747px;top:676px;width:4px;height:4px;background:#1e1e1e;border-radius:2px"></div>
<div class="t " style="font-size:18px;line-height:18px;top:723.20px;color:#06429a;left:388.50px;-webkit-text-stroke:0.35px #06429a;">100003141</div>
<div class="t bt" style="font-size:18px;line-height:18px;top:705.70px;color:#2c2c30;left:515.50px;transform:scaleX(0.9205);transform-origin:0 0;">sdgfghhfgdzfhgj</div>
<div class="t bt" style="font-size:18px;line-height:18px;top:737.70px;color:#2c2c30;left:515.50px;transform:scaleX(0.9206);transform-origin:0 0;">sfadghftjhfdgsfd</div>
<div class="t bt" style="font-size:18px;line-height:18px;top:723.20px;color:#2c2c30;left:722.50px;">sdgfgh@gmail.com</div>
<div class="t bt" style="font-size:18px;line-height:18px;top:723.20px;color:#2c2c30;left:1109.00px;">0</div>
<div class="b" style="left:1236px;top:710.5px;width:149.5px;height:40.5px;border:1px solid #5e5e5e;border-radius:5px;box-sizing:border-box"></div>
<div class="t bt" style="font-size:18px;line-height:18px;top:723.20px;color:#2c2c30;left:1250.50px;">Unverified-1</div>
<svg class="b" style="left:1368px;top:727.5px;" width="12" height="9" viewBox="0 0 12 9"><path d="M2 2 L6 6.500 L10 2" stroke="#1a1a1a" stroke-width="2" fill="none"/></svg>
<div class="t bt" style="font-size:18px;line-height:18px;top:723.20px;color:#2c2c30;left:1430.00px;">0</div>
<div class="t bt" style="font-size:18px;line-height:18px;top:723.20px;color:#2c2c30;letter-spacing:0.525px;left:1566.00px;">10/11/2024</div>
<div class="b" style="left:1747px;top:723px;width:4px;height:4px;background:#1e1e1e;border-radius:2px"></div>
<div class="b" style="left:1747px;top:729.5px;width:4px;height:4px;background:#1e1e1e;border-radius:2px"></div>
<div class="b" style="left:1747px;top:736px;width:4px;height:4px;background:#1e1e1e;border-radius:2px"></div>
<div class="b" style="left:376.5px;top:765px;width:126px;height:52px;background:#787878"></div>
<div class="b" style="left:504.5px;top:765px;width:205px;height:52px;background:#787878"></div>
<div class="b" style="left:711.5px;top:765px;width:385px;height:52px;background:#787878"></div>
<div class="b" style="left:1098.5px;top:765px;width:125px;height:52px;background:#787878"></div>
<div class="b" style="left:1225.5px;top:765px;width:191px;height:52px;background:#787878"></div>
<div class="b" style="left:1418.5px;top:765px;width:134px;height:52px;background:#787878"></div>
<div class="b" style="left:1554.5px;top:765px;width:164px;height:52px;background:#787878"></div>
<div class="b" style="left:1720.5px;top:765px;width:123.5px;height:52px;background:#787878"></div>
<div class="t " style="font-size:18px;line-height:18px;top:783.20px;color:#06429a;left:388.50px;-webkit-text-stroke:0.35px #06429a;">100003140</div>
<div class="t bt" style="font-size:18px;line-height:18px;top:782.70px;color:#2c2c30;left:515.50px;transform:scaleX(0.9442);transform-origin:0 0;">testsfsff dvfhgh</div>
<div class="t bt" style="font-size:18px;line-height:18px;top:783.20px;color:#2c2c30;left:722.50px;">testsfsff@gmail.com</div>
<div class="t bt" style="font-size:18px;line-height:18px;top:783.20px;color:#2c2c30;left:1109.00px;">0</div>
<div class="b" style="left:1236px;top:770.5px;width:149.5px;height:40.5px;border:1px solid #5e5e5e;border-radius:5px;box-sizing:border-box;background:#808080"></div>
<div class="t bt" style="font-size:18px;line-height:18px;top:783.20px;color:#2c2c30;left:1250.50px;">Unverified-1</div>
<svg class="b" style="left:1368px;top:787.5px;" width="12" height="9" viewBox="0 0 12 9"><path d="M2 2 L6 6.500 L10 2" stroke="#1a1a1a" stroke-width="2" fill="none"/></svg>
<div class="t bt" style="font-size:18px;line-height:18px;top:783.20px;color:#2c2c30;left:1430.00px;">0</div>
<div class="t bt" style="font-size:18px;line-height:18px;top:783.20px;color:#2c2c30;letter-spacing:0.525px;left:1566.00px;">10/11/2024</div>
<div class="b" style="left:1747px;top:783px;width:4px;height:4px;background:#1e1e1e;border-radius:2px"></div>
<div class="b" style="left:1747px;top:789.5px;width:4px;height:4px;background:#1e1e1e;border-radius:2px"></div>
<div class="b" style="left:1747px;top:796px;width:4px;height:4px;background:#1e1e1e;border-radius:2px"></div>
<div class="t " style="font-size:18px;line-height:18px;top:837.70px;color:#06429a;left:388.50px;-webkit-text-stroke:0.35px #06429a;">100003139</div>
<div class="t bt" style="font-size:18px;line-height:18px;top:837.20px;color:#2c2c30;left:515.50px;transform:scaleX(0.9414);transform-origin:0 0;">Kartike Ganesh</div>
<div class="t bt" style="font-size:18px;line-height:18px;top:837.70px;color:#2c2c30;left:722.50px;transform:scaleX(0.9399);transform-origin:0 0;">kartikeganesh@gmail.com</div>
<div class="t bt" style="font-size:18px;line-height:18px;top:837.70px;color:#2c2c30;left:1109.00px;transform:scaleX(0.9856);transform-origin:0 0;">2507.969</div>
<div class="b" style="left:1236px;top:825px;width:149.5px;height:40.5px;border:1px solid #5e5e5e;border-radius:5px;box-sizing:border-box"></div>
<div class="t bt" style="font-size:18px;line-height:18px;top:837.70px;color:#2c2c30;left:1250.50px;">Unverified-1</div>
<svg class="b" style="left:1368px;top:842px;" width="12" height="9" viewBox="0 0 12 9"><path d="M2 2 L6 6.500 L10 2" stroke="#1a1a1a" stroke-width="2" fill="none"/></svg>
<div class="t bt" style="font-size:18px;line-height:18px;top:837.70px;color:#2c2c30;left:1430.00px;">0</div>
<div class="t bt" style="font-size:18px;line-height:18px;top:837.70px;color:#2c2c30;letter-spacing:0.525px;left:1566.00px;">10/11/2024</div>
<div class="b" style="left:1747px;top:837.5px;width:4px;height:4px;background:#1e1e1e;border-radius:2px"></div>
<div class="b" style="left:1747px;top:844px;width:4px;height:4px;background:#1e1e1e;border-radius:2px"></div>
<div class="b" style="left:1747px;top:850.5px;width:4px;height:4px;background:#1e1e1e;border-radius:2px"></div>
<div class="b" style="left:376.5px;top:874px;width:126px;height:52px;background:#787878"></div>
<div class="b" style="left:504.5px;top:874px;width:205px;height:52px;background:#787878"></div>
<div class="b" style="left:711.5px;top:874px;width:385px;height:52px;background:#787878"></div>
<div class="b" style="left:1098.5px;top:874px;width:125px;height:52px;background:#787878"></div>
<div class="b" style="left:1225.5px;top:874px;width:191px;height:52px;background:#787878"></div>
<div class="b" style="left:1418.5px;top:874px;width:134px;height:52px;background:#787878"></div>
<div class="b" style="left:1554.5px;top:874px;width:164px;height:52px;background:#787878"></div>
<div class="b" style="left:1720.5px;top:874px;width:123.5px;height:52px;background:#787878"></div>
<div class="t " style="font-size:18px;line-height:18px;top:892.20px;color:#06429a;left:388.50px;-webkit-text-stroke:0.35px #06429a;">100003138</div>
<div class="t bt" style="font-size:18px;line-height:18px;top:891.70px;color:#2c2c30;left:515.50px;transform:scaleX(0.9611);transform-origin:0 0;">Vishal Maurya</div>
<div class="t bt" style="font-size:18px;line-height:18px;top:892.20px;color:#2c2c30;left:722.50px;transform:scaleX(0.9383);transform-origin:0 0;">vishalmaurya@gmail.com</div>
<div class="t bt" style="font-size:18px;line-height:18px;top:892.20px;color:#2c2c30;left:1109.00px;transform:scaleX(0.9808);transform-origin:0 0;">86.982</div>
<div class="b" style="left:1236px;top:879.5px;width:149.5px;height:40.5px;border:1px solid #5e5e5e;border-radius:5px;box-sizing:border-box;background:#808080"></div>
<div class="t bt" style="font-size:18px;line-height:18px;top:892.20px;color:#2c2c30;left:1250.50px;">Unverified-1</div>
<svg class="b" style="left:1368px;top:896.5px;" width="12" height="9" viewBox="0 0 12 9"><path d="M2 2 L6 6.500 L10 2" stroke="#1a1a1a" stroke-width="2" fill="none"/></svg>
<div class="t bt" style="font-size:18px;line-height:18px;top:892.20px;color:#2c2c30;left:1430.00px;">0</div>
<div class="t bt" style="font-size:18px;line-height:18px;top:892.20px;color:#2c2c30;letter-spacing:0.391px;left:1566.00px;">10/09/2024</div>
<div class="b" style="left:1747px;top:892px;width:4px;height:4px;background:#1e1e1e;border-radius:2px"></div>
<div class="b" style="left:1747px;top:898.5px;width:4px;height:4px;background:#1e1e1e;border-radius:2px"></div>
<div class="b" style="left:1747px;top:905px;width:4px;height:4px;background:#1e1e1e;border-radius:2px"></div>
<div class="t " style="font-size:18px;line-height:18px;top:952.20px;color:#06429a;left:388.50px;-webkit-text-stroke:0.35px #06429a;">100003137</div>
<div class="t bt" style="font-size:18px;line-height:18px;top:934.70px;color:#2c2c30;left:515.50px;transform:scaleX(0.8313);transform-origin:0 0;">Rama?????ÄÆè</div>
<div class="t bt" style="font-size:18px;line-height:18px;top:966.70px;color:#2c2c30;left:515.50px;transform:scaleX(0.8229);transform-origin:0 0;">Rao?????ÄÆè</div>
<div class="t bt" style="font-size:18px;line-height:18px;top:952.20px;color:#2c2c30;left:722.50px;transform:scaleX(0.9257);transform-origin:0 0;">Rama450@gmail.com</div>
<div class="t bt" style="font-size:18px;line-height:18px;top:952.20px;color:#2c2c30;left:1109.00px;">0</div>
<div class="b" style="left:1236px;top:939.5px;width:149.5px;height:40.5px;border:1px solid #5e5e5e;border-radius:5px;box-sizing:border-box"></div>
<div class="t bt" style="font-size:18px;line-height:18px;top:952.20px;color:#2c2c30;left:1250.50px;">Unverified-1</div>
<svg class="b" style="left:1368px;top:956.5px;" width="12" height="9" viewBox="0 0 12 9"><path d="M2 2 L6 6.500 L10 2" stroke="#1a1a1a" stroke-width="2" fill="none"/></svg>
<div class="t bt" style="font-size:18px;line-height:18px;top:952.20px;color:#2c2c30;left:1430.00px;">0</div>
<div class="t bt" style="font-size:18px;line-height:18px;top:952.20px;color:#2c2c30;letter-spacing:0.391px;left:1566.00px;">10/09/2024</div>
<div class="b" style="left:1747px;top:952px;width:4px;height:4px;background:#1e1e1e;border-radius:2px"></div>
<div class="b" style="left:1747px;top:958.5px;width:4px;height:4px;background:#1e1e1e;border-radius:2px"></div>
<div class="b" style="left:1747px;top:965px;width:4px;height:4px;background:#1e1e1e;border-radius:2px"></div>
<div class="b" style="left:376.5px;top:994px;width:126px;height:52px;background:#787878"></div>
<div class="b" style="left:504.5px;top:994px;width:205px;height:52px;background:#787878"></div>
<div class="b" style="left:711.5px;top:994px;width:385px;height:52px;background:#787878"></div>
<div class="b" style="left:1098.5px;top:994px;width:125px;height:52px;background:#787878"></div>
<div class="b" style="left:1225.5px;top:994px;width:191px;height:52px;background:#787878"></div>
<div class="b" style="left:1418.5px;top:994px;width:134px;height:52px;background:#787878"></div>
<div class="b" style="left:1554.5px;top:994px;width:164px;height:52px;background:#787878"></div>
<div class="b" style="left:1720.5px;top:994px;width:123.5px;height:52px;background:#787878"></div>
<div class="t " style="font-size:18px;line-height:18px;top:1012.20px;color:#06429a;left:388.50px;-webkit-text-stroke:0.35px #06429a;">100003136</div>
<div class="t bt" style="font-size:18px;line-height:18px;top:1011.70px;color:#2c2c30;left:515.50px;transform:scaleX(0.9129);transform-origin:0 0;">Elenna Elenna</div>
<div class="t bt" style="font-size:18px;line-height:18px;top:1012.20px;color:#2c2c30;left:722.50px;transform:scaleX(0.9293);transform-origin:0 0;">Elenna45@gmail.com</div>
<div class="t bt" style="font-size:18px;line-height:18px;top:1012.20px;color:#2c2c30;left:1109.00px;">0</div>
<div class="b" style="left:1236px;top:999.5px;width:149.5px;height:40.5px;border:1px solid #5e5e5e;border-radius:5px;box-sizing:border-box;background:#808080"></div>
<div class="t bt" style="font-size:18px;line-height:18px;top:1012.20px;color:#2c2c30;left:1250.50px;">Unverified-1</div>
<svg class="b" style="left:1368px;top:1016.5px;" width="12" height="9" viewBox="0 0 12 9"><path d="M2 2 L6 6.500 L10 2" stroke="#1a1a1a" stroke-width="2" fill="none"/></svg>
<div class="t bt" style="font-size:18px;line-height:18px;top:1012.20px;color:#2c2c30;left:1430.00px;">0</div>
<div class="t bt" style="font-size:18px;line-height:18px;top:1012.20px;color:#2c2c30;letter-spacing:0.391px;left:1566.00px;">10/09/2024</div>
<div class="b" style="left:1747px;top:1012px;width:4px;height:4px;background:#1e1e1e;border-radius:2px"></div>
<div class="b" style="left:1747px;top:1018.5px;width:4px;height:4px;background:#1e1e1e;border-radius:2px"></div>
<div class="b" style="left:1747px;top:1025px;width:4px;height:4px;background:#1e1e1e;border-radius:2px"></div>
<div class="b" style="left:629px;top:428px;width:650px;height:374px;background:#fff;border-radius:9px"></div>
<div class="t " style="font-size:20.5px;line-height:20.5px;top:455.25px;color:#4a4e5a;font-weight:700;left:649.00px;transform:scaleX(0.9077);transform-origin:0 0;">Download pdf</div>
<svg class="b" style="left:1241.5px;top:456.5px;" width="16" height="16" viewBox="0 0 16 16"><path d="M2.4000000000000004 2.4000000000000004 L13.6 13.6 M13.6 2.4000000000000004 L2.4000000000000004 13.6" stroke="#4f4f4f" stroke-width="2.3" stroke-linecap="round"/></svg>
<div class="b" style="left:629px;top:503px;width:650px;height:1px;background:#e4e8ee"></div>
<div class="b" style="left:679px;top:553.5px;width:141.5px;height:191px;background:#fff;border-radius:0 0 8px 8px;box-shadow:0 6px 14px rgba(0,0,0,.13)"></div>
<div class="b" style="left:679px;top:553.5px;width:143.5px;height:161.5px;background:#f0f0f0;border:1px solid #2fae57;border-radius:4px;box-sizing:border-box"></div>
<svg class="b" style="left:708px;top:568px;opacity:1.0" width="86" height="100" viewBox="0 0 86 100"><g fill="none" stroke="#d32203" stroke-linejoin="round"><path stroke-width="7" d="M8 3.500 H53.500 Q57.500 3.500 60.500 6.300 L79.500 24.500 Q82.500 27.500 82.500 32 V92.500 Q82.500 96.500 78.500 96.500 H7.500 Q3.500 96.500 3.500 92.500 V7.500 Q3.500 3.500 7.500 3.500 Z"/><path stroke-width="7" d="M54.300 4 V27.500 Q54.300 31.300 58 31.300 H82"/><path stroke-width="3" d="M40 30 C36 30 37 42 41 52 C45 60 55 65 63 65 C70 65 72 69 67 69 C58 69 45 66 34 70 C26 73 22 84 17 84 C13 84 15 78 22 73 C30 66 38 55 41 44 C43 36 43 30 40 30 Z"/></g></svg>
<div class="t " style="font-size:18px;line-height:18px;top:678.30px;color:#151515;left:708.90px;-webkit-text-stroke:0.75px #151515;">Card PDF</div>
<div class="t " style="font-size:18px;line-height:18px;top:723.60px;color:#666b75;left:680.00px;transform:scaleX(0.9376);transform-origin:0 0;">Download PDF</div>
<svg class="b" style="left:802px;top:719px;" width="19" height="19" viewBox="0 0 512 512"><path fill="#2fc63f" d="M216 0h80c13.3 0 24 10.7 24 24v168h87.7c17.8 0 26.7 21.500 14.100 34.100L269.700 378.300c-7.500 7.500-19.800 7.500-27.300 0L90.100 226.100c-12.600-12.600-3.700-34.100 14.100-34.100H192V24c0-13.300 10.700-24 24-24zm296 376v112c0 13.300-10.700 24-24 24H24c-13.300 0-24-10.700-24-24V376c0-13.300 10.700-24 24-24h146.700l49 49c20.100 20.100 52.500 20.100 72.600 0l49-49H488c13.300 0 24 10.700 24 24zm-124 88c0-11-9-20-20-20s-20 9-20 20 9 20 20 20 20-9 20-20zm64 0c0-11-9-20-20-20s-20 9-20 20 9 20 20 20 20-9 20-20z"/></svg>
<div class="b" style="left:883px;top:553.5px;width:141.5px;height:191px;background:#fff;border-radius:0 0 8px 8px;box-shadow:0 6px 14px rgba(0,0,0,.13)"></div>
<div class="b" style="left:883px;top:553.5px;width:143.5px;height:161.5px;background:#f0f0f0;border:1px solid #2fae57;border-radius:4px;box-sizing:border-box"></div>
<svg class="b" style="left:912px;top:568px;opacity:1.0" width="86" height="100" viewBox="0 0 86 100"><g fill="none" stroke="#d32203" stroke-linejoin="round"><path stroke-width="7" d="M8 3.500 H53.500 Q57.500 3.500 60.500 6.300 L79.500 24.500 Q82.500 27.500 82.500 32 V92.500 Q82.500 96.500 78.500 96.500 H7.500 Q3.500 96.500 3.500 92.500 V7.500 Q3.500 3.500 7.500 3.500 Z"/><path stroke-width="7" d="M54.300 4 V27.500 Q54.300 31.300 58 31.300 H82"/><path stroke-width="3" d="M40 30 C36 30 37 42 41 52 C45 60 55 65 63 65 C70 65 72 69 67 69 C58 69 45 66 34 70 C26 73 22 84 17 84 C13 84 15 78 22 73 C30 66 38 55 41 44 C43 36 43 30 40 30 Z"/></g></svg>
<div class="t " style="font-size:18px;line-height:18px;top:678.30px;color:#151515;left:913.10px;transform:scaleX(0.9716);transform-origin:0 0;-webkit-text-stroke:0.75px #151515;">KYC PDF</div>
<div class="t " style="font-size:18px;line-height:18px;top:723.60px;color:#666b75;left:884.00px;transform:scaleX(0.9376);transform-origin:0 0;">Download PDF</div>
<svg class="b" style="left:1006px;top:719px;" width="19" height="19" viewBox="0 0 512 512"><path fill="#2fc63f" d="M216 0h80c13.3 0 24 10.7 24 24v168h87.7c17.8 0 26.7 21.500 14.100 34.100L269.700 378.300c-7.500 7.500-19.800 7.500-27.300 0L90.100 226.100c-12.600-12.600-3.700-34.100 14.100-34.100H192V24c0-13.300 10.700-24 24-24zm296 376v112c0 13.300-10.700 24-24 24H24c-13.300 0-24-10.700-24-24V376c0-13.300 10.700-24 24-24h146.700l49 49c20.100 20.100 52.500 20.100 72.600 0l49-49H488c13.300 0 24 10.700 24 24zm-124 88c0-11-9-20-20-20s-20 9-20 20 9 20 20 20 20-9 20-20zm64 0c0-11-9-20-20-20s-20 9-20 20 9 20 20 20 20-9 20-20z"/></svg>
<div class="b" style="left:1088px;top:553.5px;width:141.5px;height:191px;background:#fff;border-radius:0 0 8px 8px;box-shadow:0 6px 14px rgba(0,0,0,.13)"></div>
<div class="b" style="left:1088px;top:553.5px;width:143.5px;height:161.5px;background:#f0f0f0;border:1px solid #f0222a;border-radius:4px;box-sizing:border-box"></div>
<svg class="b" style="left:1117px;top:568px;opacity:0.999" width="86" height="100" viewBox="0 0 86 100"><g fill="none" stroke="#d63a1e" stroke-linejoin="round"><path stroke-width="7" d="M8 3.500 H53.500 Q57.500 3.500 60.500 6.300 L79.500 24.500 Q82.500 27.500 82.500 32 V92.500 Q82.500 96.500 78.500 96.500 H7.500 Q3.500 96.500 3.500 92.500 V7.500 Q3.500 3.500 7.500 3.500 Z"/><path stroke-width="7" d="M54.300 4 V27.500 Q54.300 31.300 58 31.300 H82"/><path stroke-width="3" d="M40 30 C36 30 37 42 41 52 C45 60 55 65 63 65 C70 65 72 69 67 69 C58 69 45 66 34 70 C26 73 22 84 17 84 C13 84 15 78 22 73 C30 66 38 55 41 44 C43 36 43 30 40 30 Z"/></g></svg>
<div class="t " style="font-size:18px;line-height:18px;top:678.30px;color:#2a2a2a;left:1109.50px;-webkit-text-stroke:0.6px #2a2a2a;">Federal PDF</div>
<div class="t " style="font-size:18px;line-height:18px;top:723.60px;color:#666b75;left:1088.00px;transform:scaleX(0.9738);transform-origin:0 0;">Not Available</div>
<svg class="b" style="left:1211px;top:719px;" width="19" height="19" viewBox="0 0 512 512"><path fill="#f0506a" d="M216 0h80c13.3 0 24 10.7 24 24v168h87.7c17.8 0 26.7 21.500 14.100 34.100L269.700 378.300c-7.500 7.500-19.800 7.500-27.300 0L90.100 226.100c-12.600-12.600-3.700-34.100 14.100-34.100H192V24c0-13.300 10.700-24 24-24zm296 376v112c0 13.300-10.700 24-24 24H24c-13.300 0-24-10.700-24-24V376c0-13.300 10.700-24 24-24h146.700l49 49c20.100 20.100 52.500 20.100 72.600 0l49-49H488c13.300 0 24 10.700 24 24zm-124 88c0-11-9-20-20-20s-20 9-20 20 9 20 20 20 20-9 20-20zm64 0c0-11-9-20-20-20s-20 9-20 20 9 20 20 20 20-9 20-20z"/></svg>
<div class="b" style="left:1088px;top:498px;width:141px;height:47.5px;background:#1f1f1f;border-radius:5px"></div>
<svg class="b" style="left:1150.5px;top:545px;" width="15" height="8" viewBox="0 0 15 8"><path d="M0 0 H15 L7.500 8 Z" fill="#1f1f1f"/></svg>
<div class="t " style="font-size:13px;line-height:13px;top:506.00px;color:#fff;left:758.50px;width:800px;text-align:center;transform:scaleX(0.9228);transform-origin:50% 0;">Federal PDF Not</div>
<div class="t " style="font-size:13px;line-height:13px;top:525.00px;color:#fff;left:758.50px;width:800px;text-align:center;transform:scaleX(0.9520);transform-origin:50% 0;">Available</div>
<div class="b" style="left:0px;top:1030px;width:1920px;height:50px;background:linear-gradient(90deg,#3a332e 0%,#39322d 3%,#332e28 22%,#312c26 36%,#1f1f1f 41.500%,#1e1e1d 57%,#2b2a23 66%,#343229 100%)"></div>
<svg class="b" style="left:20px;top:1045px;" width="20" height="20" viewBox="0 0 18 18"><path d="M0 2.600 L7.300 1.600 V8.500 H0 Z M8.300 1.450 L18 0 V8.500 H8.300 Z M0 9.500 H7.300 V16.400 L0 15.400 Z M8.300 9.500 H18 V18 L8.300 16.550 Z" fill="#fff"/></svg>
<div class="b" style="left:60px;top:1030.5px;width:359.5px;height:49.5px;background:#363636;border:1px solid #606060;box-sizing:border-box"></div>
<svg class="b" style="left:75px;top:1044px;" width="22" height="22" viewBox="0 0 22 22"><circle cx="13" cy="8.500" r="6" fill="none" stroke="#f0f0f0" stroke-width="1.500"/><path d="M8.700 12.800 L1.500 20" stroke="#f0f0f0" stroke-width="1.500"/></svg>
<div class="t " style="font-size:18px;line-height:18px;top:1046.50px;color:#f0f0f0;letter-spacing:0.258px;left:110.00px;">Type here to search</div>
<svg class="b" style="left:330px;top:1036px;" width="76" height="36" viewBox="0 0 76 36"><path d="M30 1.500 C32.500 10 36 13.500 44.500 16 C36 18.500 32.500 22 30 30.500 C27.500 22 24 18.500 15.500 16 C24 13.500 27.500 10 30 1.500 Z" fill="#f9c22e" stroke="#f9c22e" stroke-width="2.200" stroke-linejoin="round"/><path d="M59 15.500 C60.300 20 61.500 21.200 66 22.500 C61.500 23.800 60.300 25 59 29.500 C57.700 25 56.500 23.800 52 22.500 C56.500 21.200 57.700 20 59 15.500 Z" fill="#f9c22e" stroke="#f9c22e" stroke-width="1.600" stroke-linejoin="round"/><path d="M7 23.500 C7.500 26.500 8 27.500 11 29 C8 29.500 7 30.500 5.500 33 C5.500 30.500 4.500 29.500 1.500 28 C4.500 27.500 6 26.500 7 23.500 Z" fill="#2aa5f0" stroke="#2aa5f0" stroke-width="1.200" stroke-linejoin="round"/><circle cx="50.500" cy="6.500" r="2" fill="#f2683a"/><circle cx="74" cy="30" r="2" fill="#7dc242"/></svg>
<svg class="b" style="left:438px;top:1043px;" width="24" height="24" viewBox="0 0 24 24"><path d="M2.500 3 H15 M2.500 21 H15" stroke="#f0f0f0" stroke-width="1.500"/><path d="M3.200 3 V6 M3.200 18 V21 M14.300 3 V6 M14.300 18 V21" stroke="#f0f0f0" stroke-width="1.500"/><rect x="5" y="7.500" width="9.500" height="9" fill="none" stroke="#f0f0f0" stroke-width="1.500"/><path d="M20.500 2.500 V6.500 M20.500 17.500 V21.500 M20.500 9.500 V14.500" stroke="#f0f0f0" stroke-width="1.500"/><path d="M17.500 2.500 V6 M17.500 18 V21.500" stroke="#f0f0f0" stroke-width="1.200"/></svg>
<svg class="b" style="left:499px;top:1040px;" width="30" height="30" viewBox="0 0 30 30"><path d="M1 5 H11 L13.500 8 H28 V26 H1 Z" fill="#f4b400"/><path d="M1 10 H29 V26 H1 Z" fill="#ffd75e"/><path d="M8 17 H22 V26 H8 Z" fill="#3a8ee6"/><path d="M11 21 H19 V26 H11 Z" fill="#ffd75e"/></svg>
<svg class="b" style="left:563px;top:1040.5px;" width="26" height="29" viewBox="0 0 26 29"><defs><linearGradient id="m3a" x1="0" y1="0" x2="1" y2="1"><stop offset="0" stop-color="#2f6be0"/><stop offset="1" stop-color="#45d4f2"/></linearGradient><linearGradient id="m3b" x1="0" y1="0" x2="0.300" y2="1"><stop offset="0" stop-color="#a878ea"/><stop offset="1" stop-color="#3560d8"/></linearGradient><linearGradient id="m3c" x1="0" y1="1" x2="1" y2="0"><stop offset="0" stop-color="#d890f6"/><stop offset="1" stop-color="#8450cc"/></linearGradient></defs><g stroke-linejoin="round" stroke-width="2"><path d="M13 1 L25 8 V21 L18 17.500 V11.500 L13 8.500 L9 6 Z" fill="url(#m3a)" stroke="url(#m3a)"/><path d="M1 8 L13 1 L13 8.500 L8 11.500 V17.500 L8 24 L1 21 Z" fill="url(#m3b)" stroke="url(#m3b)"/><path d="M1.500 21.500 L8 17.500 L13 20.500 L18 17.500 L25 21 L13 28 Z" fill="url(#m3c)" stroke="url(#m3c)"/></g><path d="M13 1 L25 8 V14 L13 7.500 Z" fill="url(#m3a)"/></svg>
<svg class="b" style="left:622.5px;top:1040px;" width="31" height="30" viewBox="0 0 31 30"><defs><linearGradient id="eg" x1="0" y1="0.600" x2="1" y2="0.200"><stop offset="0" stop-color="#1a86d8"/><stop offset=".55" stop-color="#2bbfd0"/><stop offset="1" stop-color="#66d848"/></linearGradient></defs><path d="M1 17 C0 8 7 0.500 16 0.500 C25 0.500 30.500 7 30 13.500 C29.500 18 26 20.500 21.500 20.500 C18 20.500 17 19 17.500 17.500 C18.500 15.500 18 12 14.500 12 C10 12 7 16 8.500 21.500 C10 27 16 29.800 22 28 C18 30.500 11 30.500 6 26.500 C3 24 1.500 21 1 17 Z" fill="url(#eg)"/><path d="M8.500 21.500 C7 16 10 12 14.500 12 C11.500 13.500 11 17.500 12.500 20.500 C15 25.500 22 25.500 27.500 21.500 C27 24 25 26.500 22 28 C16 29.800 10 27 8.500 21.500 Z" fill="#1560b0"/><path d="M1 17 C1 11 6 7 12 7.500 C16 8 18.500 10.500 18.500 13.500 C17.500 12.300 16 12 14.500 12 C10 12 7 16 8.500 21.500 C9.500 25 12 27.500 15 28.500 C7 28.500 1.500 23 1 17 Z" fill="#1a7fd4" opacity=".85"/></svg>
<svg class="b" style="left:684px;top:1040px;" width="32" height="30" viewBox="0 0 32 30"><defs><linearGradient id="ph1" x1="0" y1="0" x2="1" y2="1"><stop offset="0" stop-color="#7ec8ee"/><stop offset="1" stop-color="#4a78c8"/></linearGradient></defs><rect x="2" y="5" width="24" height="23.500" fill="url(#ph1)" stroke="#4a4ae0" stroke-width="1.300"/><path d="M3 22 C8 20 12 24 18 22 L25 28 H3 Z" fill="#c8b898" opacity=".8"/><ellipse cx="19" cy="13" rx="10" ry="11.500" fill="#9fd0ee"/><path d="M19 1.500 C26 2 29.500 8 29 14 C28.500 20 24 24.500 19 24.500 C16 20 16 8 19 1.500 Z" fill="#d8a070"/><ellipse cx="22" cy="14" rx="3.800" ry="5" fill="#1a0e08"/><ellipse cx="19" cy="13" rx="10" ry="11.500" fill="none" stroke="#1e3e7e" stroke-width="1.800"/></svg>
<div class="b" style="left:731px;top:1030px;width:62px;height:50px;background:#4b4b4b"></div>
<div class="b" style="left:731px;top:1077px;width:62px;height:3px;background:#76b9ed"></div>
<svg class="b" style="left:747px;top:1039px;" width="32" height="32" viewBox="0 0 32 32"><circle cx="14" cy="14" r="13" fill="#fff"/><path d="M14 1 A13 13 0 0 1 25.300 7.500 H14 A6.500 6.500 0 0 0 8.400 10.700 L3.200 6.500 A13 13 0 0 1 14 1 Z" fill="#e33b2e"/><path d="M25.300 7.500 A13 13 0 0 1 13 27 L18.800 17.800 A6.500 6.500 0 0 0 19.600 7.500 Z" fill="#fbc116"/><path d="M3.200 6.500 L8.400 16.500 A6.500 6.500 0 0 0 16.500 20 L13 27 A13 13 0 0 1 3.200 6.500 Z" fill="#2ea44f"/><circle cx="14" cy="14" r="5.200" fill="#4285f4" stroke="#fff" stroke-width="1.300"/><circle cx="22.500" cy="23" r="8.800" fill="#202020"/><circle cx="22.500" cy="20.300" r="2.900" fill="#fff"/><path d="M16.800 28 C16.800 24.300 20 23.800 22.500 23.800 C25 23.800 28.200 24.300 28.200 28 Z" fill="#fff"/></svg>
<svg class="b" style="left:809px;top:1040px;" width="30" height="30" viewBox="0 0 30 30"><path d="M9 3 L15 1 L21 3 L19 9 H11 Z" fill="#3aa0f5"/><path d="M3 10 L9 5 L12 11 L8 18 L2 17 Z" fill="#2b7de9"/><path d="M27 10 L21 5 L18 11 L22 18 L28 17 Z" fill="#2b7de9"/><path d="M6 21 L11 20 L15 24 L19 20 L24 21 L22 27 L15 29 L8 27 Z" fill="#1f5fd0"/></svg>
<svg class="b" style="left:871px;top:1040px;" width="30" height="30" viewBox="0 0 30 30"><defs><radialGradient id="fg" cx=".6" cy=".3" r=".8"><stop offset="0" stop-color="#ffe14d"/><stop offset=".5" stop-color="#ff8a16"/><stop offset="1" stop-color="#e8305a"/></radialGradient></defs><path d="M15 3 C18 1 21 2 22 5 C27 8 29 14 27 20 C25 26 19 29 14 29 C7 29 2 23 2 16 C2 12 4 9 6 7 C6 9 7 10 8 10 C9 6 12 4 15 3 Z" fill="url(#fg)"/><circle cx="15" cy="17" r="6.500" fill="#7a3fd0"/><path d="M9 15 C11 12 16 11 19 13 C16 13 14 15 15 18 C12 19 9 18 9 15 Z" fill="#ff9a1a"/></svg>
<svg class="b" style="left:932px;top:1044px;" width="32" height="23" viewBox="0 0 32 23"><rect x="0" y="0" width="32" height="23" rx="6" fill="#f00"/><path d="M13 6.500 L21 11.500 L13 16.500 Z" fill="#fff"/></svg>
<svg class="b" style="left:995px;top:1040px;" width="32" height="32" viewBox="0 0 32 32"><circle cx="14" cy="14" r="12" fill="#1aa7ea"/><circle cx="7" cy="7" r="6" fill="#1aa7ea"/><circle cx="21" cy="21" r="6" fill="#1aa7ea"/><circle cx="22" cy="22" r="7.500" fill="#e8352a"/></svg>
<div class="t " style="font-size:20px;line-height:20px;top:1045.00px;color:#fff;font-weight:700;left:609.00px;width:800px;text-align:center;">S</div>
<div class="t " style="font-size:11.5px;line-height:11.5px;top:1056.55px;color:#fff;left:617.00px;width:800px;text-align:center;">1</div>
<div class="b" style="left:985px;top:1077px;width:50px;height:3px;background:#76b9ed"></div>
<svg class="b" style="left:1056px;top:1040px;" width="32" height="30" viewBox="0 0 32 30"><path d="M10 2 H28 V28 H10 Z" fill="#f4f6fa" stroke="#9ab0d4" stroke-width="1"/><path d="M13 7 H26 M13 11 H26 M13 15 H26 M13 19 H26" stroke="#8aa6d8" stroke-width="1.300"/><rect x="1" y="6" width="19" height="18" fill="#2a5caa"/><path d="M22 20 L30 17 L31 27 L24 29 Z" fill="#e8eef8" stroke="#9ab0d4" stroke-width=".800"/></svg>
<div class="t " style="font-size:19px;line-height:19px;top:1046.50px;color:#fff;font-weight:700;left:666.50px;width:800px;text-align:center;">W</div>
<div class="b" style="left:1047px;top:1077px;width:50px;height:3px;background:#76b9ed"></div>
<svg class="b" style="left:1118px;top:1040px;" width="30" height="30" viewBox="0 0 30 30"><circle cx="15" cy="15" r="10" fill="none" stroke="#8c8c8c" stroke-width="5"/><rect x="13" y="0" width="4" height="5" fill="#8c8c8c" transform="rotate(0 15 15)"/><rect x="13" y="0" width="4" height="5" fill="#8c8c8c" transform="rotate(30 15 15)"/><rect x="13" y="0" width="4" height="5" fill="#8c8c8c" transform="rotate(60 15 15)"/><rect x="13" y="0" width="4" height="5" fill="#8c8c8c" transform="rotate(90 15 15)"/><rect x="13" y="0" width="4" height="5" fill="#8c8c8c" transform="rotate(120 15 15)"/><rect x="13" y="0" width="4" height="5" fill="#8c8c8c" transform="rotate(150 15 15)"/><rect x="13" y="0" width="4" height="5" fill="#8c8c8c" transform="rotate(180 15 15)"/><rect x="13" y="0" width="4" height="5" fill="#8c8c8c" transform="rotate(210 15 15)"/><rect x="13" y="0" width="4" height="5" fill="#8c8c8c" transform="rotate(240 15 15)"/><rect x="13" y="0" width="4" height="5" fill="#8c8c8c" transform="rotate(270 15 15)"/><rect x="13" y="0" width="4" height="5" fill="#8c8c8c" transform="rotate(300 15 15)"/><rect x="13" y="0" width="4" height="5" fill="#8c8c8c" transform="rotate(330 15 15)"/><circle cx="15" cy="15" r="7.500" fill="#2a2a2a"/></svg>
<div class="t " style="font-size:7px;line-height:7px;top:1047.50px;color:#e8821e;font-weight:700;left:733.00px;width:800px;text-align:center;">Java EE</div>
<div class="t " style="font-size:7px;line-height:7px;top:1054.50px;color:#e8821e;font-weight:700;left:733.00px;width:800px;text-align:center;">IDE</div>
<div class="b" style="left:1109px;top:1077px;width:50px;height:3px;background:#76b9ed"></div>
<svg class="b" style="left:1395px;top:1038px;" width="34" height="30" viewBox="0 0 34 30"><circle cx="16" cy="14" r="11" fill="#f5a623"/><path d="M3 13 H27 M1 18 H24 M5 23 H28" stroke="#f7d08a" stroke-width="2.200" stroke-linecap="round"/><circle cx="25" cy="8" r="6.500" fill="#d92c20"/></svg>
<div class="t " style="font-size:10px;line-height:10px;top:1043.00px;color:#fff;left:1020.00px;width:800px;text-align:center;">1</div>
<div class="t " style="font-size:18px;line-height:18px;top:1047.00px;color:#f0f0f0;left:1436.00px;transform:scaleX(0.9199);transform-origin:0 0;">31°C</div>
<div class="t " style="font-size:18px;line-height:18px;top:1047.00px;color:#f0f0f0;left:1484.60px;transform:scaleX(0.9138);transform-origin:0 0;">Haze</div>
<svg class="b" style="left:1552px;top:1048px;" width="18" height="12" viewBox="0 0 18 12"><path d="M2 10 L9 3 L16 10" stroke="#f0f0f0" stroke-width="1.500" fill="none"/></svg>
<svg class="b" style="left:1581px;top:1046px;" width="22" height="16" viewBox="0 0 22 16"><rect x="4.500" y="4" width="15" height="9" fill="none" stroke="#f0f0f0" stroke-width="1.300"/><rect x="19.500" y="6.500" width="1.800" height="4" fill="#f0f0f0"/><rect x="6" y="5.500" width="4" height="6" fill="#f0f0f0"/><path d="M1 1 V5 M3 1 V5 M0 5 H4 V7.500 H0 Z" stroke="#f0f0f0" stroke-width=".900" fill="none"/></svg>
<svg class="b" style="left:1612px;top:1045px;" width="20" height="18" viewBox="0 0 20 18"><path d="M1.500 16.500 A15 15 0 0 1 16.500 1.500" stroke="#9a9a9a" stroke-width="1.300" fill="none"/><path d="M5.500 16.500 A11 11 0 0 1 16.500 5.500" stroke="#c8c8c8" stroke-width="1.300" fill="none"/><path d="M9.500 16.500 A7 7 0 0 1 16.500 9.500" stroke="#f0f0f0" stroke-width="1.300" fill="none"/><circle cx="15.500" cy="15.500" r="1.700" fill="#f0f0f0"/></svg>
<svg class="b" style="left:1641px;top:1045px;" width="22" height="18" viewBox="0 0 22 18"><path d="M1.500 6.500 H5 L9.500 2.500 V15.500 L5 11.500 H1.500 Z" fill="none" stroke="#f0f0f0" stroke-width="1.300" stroke-linejoin="round"/><path d="M12.500 6.500 A3.500 3.500 0 0 1 12.500 11.500 M15 4 A7 7 0 0 1 15 14 M17.500 1.800 A10 10 0 0 1 17.500 16.200" stroke="#f0f0f0" stroke-width="1.200" fill="none"/></svg>
<div class="t " style="font-size:15px;line-height:15px;top:1047.80px;color:#f0f0f0;left:1675.00px;transform:scaleX(0.8737);transform-origin:0 0;">ENG</div>
<div class="t " style="font-size:15px;line-height:15px;top:1036.00px;color:#f0f0f0;left:1358.00px;width:800px;text-align:center;transform:scaleX(0.9324);transform-origin:50% 0;">16:12</div>
<div class="t " style="font-size:15px;line-height:15px;top:1059.00px;color:#f0f0f0;left:1358.20px;width:800px;text-align:center;transform:scaleX(0.9748);transform-origin:50% 0;">14-10-2024</div>
<svg class="b" style="left:1817px;top:1043px;" width="34" height="34" viewBox="0 0 34 34"><path d="M2 2 H22 V19 H9 L9 21.200 L6.800 19 H2 Z" fill="#fff"/><path d="M6 6.500 H18 M6 10.500 H18 M6 14.400 H18" stroke="#2a2a24" stroke-width="1.100"/><circle cx="21.400" cy="21.700" r="9.800" fill="#35342c" stroke="#9a9a94" stroke-width="1"/></svg>
<div class="t " style="font-size:15px;line-height:15px;top:1057.00px;color:#fff;font-weight:700;left:1438.40px;width:800px;text-align:center;">1</div>
<svg class="b" style="left:1864px;top:1041px;" width="30" height="22" viewBox="0 0 30 22"><defs><linearGradient id="cp1" x1="0" y1="0" x2="0" y2="1"><stop offset="0" stop-color="#1f8cf0"/><stop offset=".35" stop-color="#22a8e8"/><stop offset=".7" stop-color="#5cc46a"/><stop offset="1" stop-color="#f2d020"/></linearGradient><linearGradient id="cp2" x1="0" y1="0" x2="0" y2="1"><stop offset="0" stop-color="#b05af0"/><stop offset=".55" stop-color="#f0609a"/><stop offset="1" stop-color="#f59a3a"/></linearGradient></defs><path d="M14 1.500 H19 Q21.500 1.500 22.300 4 L23.500 8 H17 Z" fill="#1a5ae0"/><path d="M6.500 1.500 H15 Q17.500 1.500 16.800 4 L13 16.500 Q12.300 19 9.800 19 H4.500 Q1.300 19 2.200 16 L4.800 4 Q5.300 1.500 7.500 1.500 Z" fill="url(#cp1)"/><path d="M19.500 7.500 H24.500 Q27.800 7.500 26.900 10.500 L24.800 17.500 Q24.200 19.500 22 19.500 H13.500 L16.500 9.500 Q17.200 7.500 19.500 7.500 Z" fill="url(#cp2)"/></svg>
<div class="b" style="left:1872px;top:1060px;width:19px;height:7.3px;background:#f5c816;border-radius:2px"></div>
<div class="t " style="font-size:6.5px;line-height:6.5px;top:1061.05px;color:#2a1e05;font-weight:700;left:1481.50px;width:800px;text-align:center;letter-spacing:0.4px;">PRE</div>
<div class="b" style="left:1913.5px;top:1030px;width:1px;height:50px;background:#5a5a5a"></div>
<div class="b" style="left:1918.5px;top:202px;width:1.5px;height:84px;background:#6b7385"></div>
</body></html>
